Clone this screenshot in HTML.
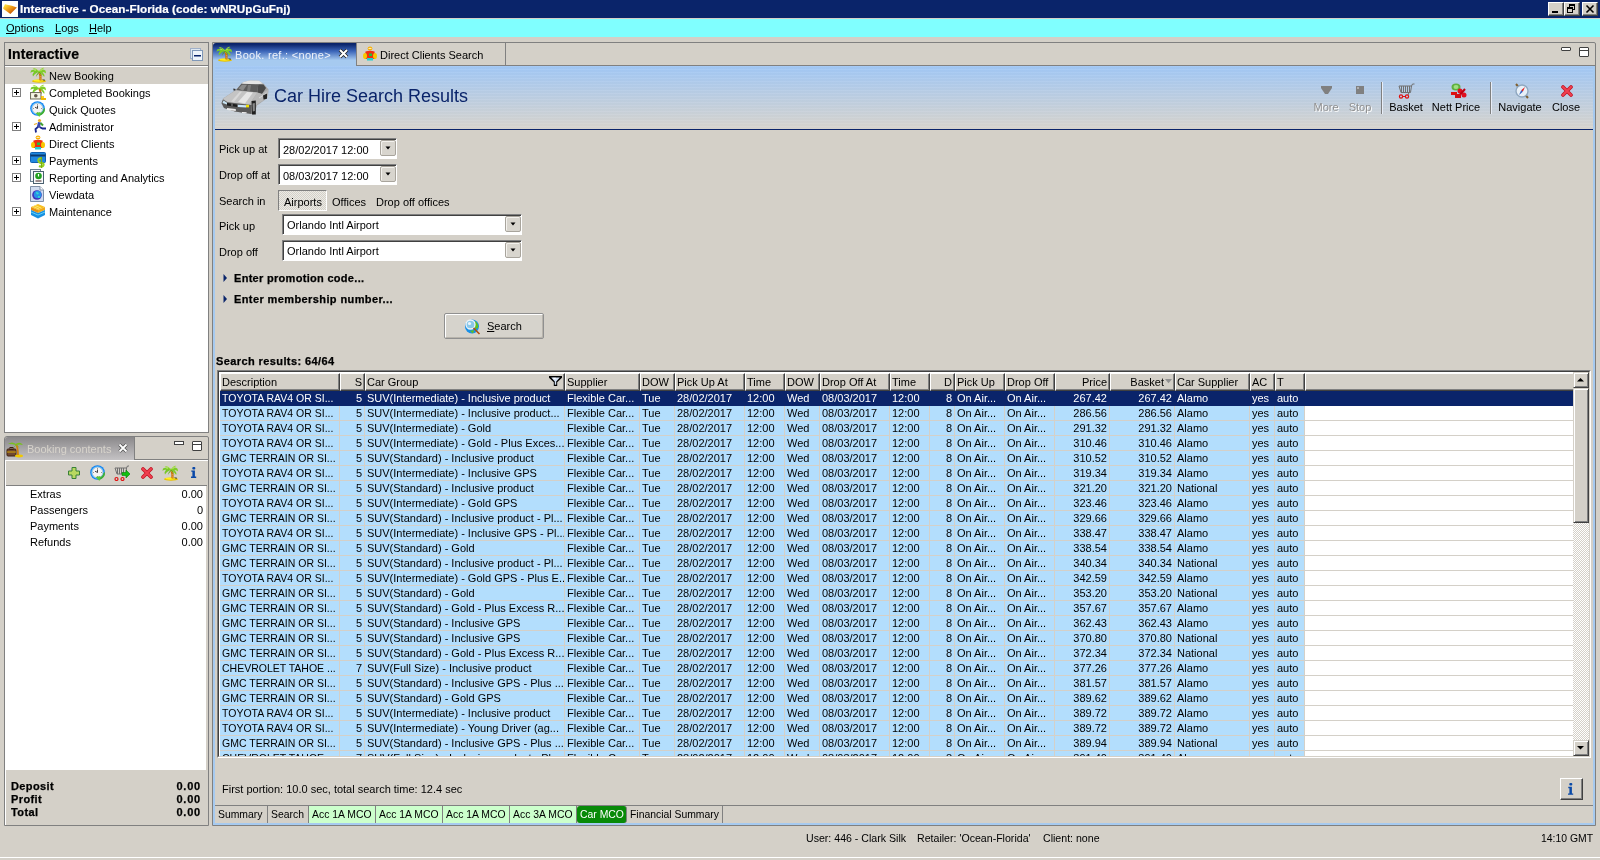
<!DOCTYPE html><html><head><meta charset="utf-8"><style>
*{margin:0;padding:0;box-sizing:border-box}
html,body{width:1600px;height:860px;overflow:hidden;background:#d4d0c8;font-family:"Liberation Sans",sans-serif;font-size:11px;color:#000}
.a{position:absolute}
.t{position:absolute;white-space:nowrap;line-height:13px}
.c{position:absolute;white-space:nowrap;line-height:13px;overflow:hidden}
.up{border-top:1px solid #fff;border-left:1px solid #fff;border-right:1px solid #404040;border-bottom:1px solid #404040;box-shadow:inset -1px -1px 0 #808080;background:#d4d0c8}
</style></head><body><div style="position:absolute;left:0;top:0;width:1600px;height:860px;will-change:transform">
<svg width="0" height="0" style="position:absolute">
<defs>
<symbol id="palm" viewBox="0 0 16 16">
 <ellipse cx="9" cy="14.2" rx="7" ry="1.6" fill="#e8c000"/>
 <ellipse cx="8.5" cy="13.6" rx="5" ry="1.1" fill="#fff020"/>
 <path d="M9.2 5 Q11.2 9 10.4 13.5" stroke="#c87010" stroke-width="2.2" fill="none"/>
 <path d="M9.5 6.5 L10.5 7.2 M10.2 9.5 L11 10.2 M10.2 11.8 L11 12.2" stroke="#f8c040" stroke-width="0.9"/>
 <path d="M12.5 12.8 L15 13.2" stroke="#303030" stroke-width="0.9"/>
 <path d="M9 4 Q5.5 1 1 3.6 L0.5 6 Q2 4.5 4 4.8 L2.5 7.5 L3 9.5 Q5.5 5.5 9.5 5 Z" fill="#78c828"/>
 <path d="M9 4 Q12.5 1 15.6 3.8 L16 6.5 Q14.5 4.8 12.5 5 L14.5 8 L14.2 10 Q11.5 6 8.8 5.2 Z" fill="#80cc28"/>
 <path d="M9 4.5 Q6 0 2.5 1.2 Q6.5 1.8 8.5 5 Z M9.2 4.4 Q11.5 0 14.5 1 Q11 2 9.4 5 Z" fill="#98dc30"/>
 <path d="M9 5 Q6.5 6.5 5.8 10 Q7.8 7.2 9.3 5.4 Z M9.3 5 Q11.8 6.5 12.5 9.8 Q10.8 7.2 9 5.4Z" fill="#58a818"/>
 <path d="M4 3 L6 3.6 M12 3 L10.2 3.8" stroke="#b8e860" stroke-width="0.8"/>
</symbol>
<symbol id="cross" viewBox="0 0 12 12">
 <path d="M2 2 L10 10 M10 2 L2 10" stroke="#c01020" stroke-width="3.6" stroke-linecap="round"/>
 <path d="M2 2 L10 10 M10 2 L2 10" stroke="#f04050" stroke-width="2.2" stroke-linecap="round"/>
</symbol>
<symbol id="clock" viewBox="0 0 16 16">
 <circle cx="7.5" cy="7.5" r="7.3" fill="#1080f0"/>
 <circle cx="7.5" cy="7.5" r="6.2" fill="#60c0ff"/>
 <circle cx="7.5" cy="7.5" r="5.2" fill="#f4f4f4" stroke="#b0b8c0" stroke-width="0.5"/>
 <path d="M7.5 3 V3.8 M7.5 11.2 V12 M3 7.5 H3.8 M11.2 7.5 H12" stroke="#606060" stroke-width="0.8"/>
 <path d="M7.5 4.5 V7.5 L5 6.2" stroke="#303030" stroke-width="0.9" fill="none"/>
 <path d="M15 7 Q15.5 12.5 9.5 15 L8.5 13 Q13 11.5 13.5 8 Z" fill="#40b030"/>
 <path d="M5.5 12 L9.5 16 L10.5 11 Z" fill="#58c838"/>
</symbol>
<symbol id="cart" viewBox="0 0 16 16">
 <path d="M1 3 H13.5 L12.5 9 H3 Z" fill="none" stroke="#707070" stroke-width="1"/>
 <path d="M4 3 V9 M6 3 V9 M8 3 V9 M10 3 V9 M12 3 V9" stroke="#707070" stroke-width="1"/>
 <path d="M13.5 3 L14.5 1 H16" stroke="#707070" stroke-width="1" fill="none"/>
 <path d="M11.5 9 L10.5 11" stroke="#707070"/>
 <circle cx="3.5" cy="13.5" r="1.6" fill="none" stroke="#e01010" stroke-width="1.2"/>
 <circle cx="9.5" cy="13.5" r="1.6" fill="none" stroke="#e01010" stroke-width="1.2"/>
 <path d="M3 13.5 H8" stroke="#e01010" stroke-width="1"/>
</symbol>
<symbol id="person" viewBox="0 0 16 16">
 <ellipse cx="8" cy="2.6" rx="2.4" ry="2" fill="#f8b000"/>
 <path d="M6.5 2.4 H9.5" stroke="#fff" stroke-width="0.8"/>
 <path d="M3.5 5.5 Q8 4 12.5 5.5 L13 13 H3 Z" fill="#f03010"/>
 <ellipse cx="3" cy="10" rx="2" ry="3" fill="#f8c800"/>
 <ellipse cx="13" cy="10" rx="2" ry="3" fill="#f8c800"/>
 <rect x="7" y="7.5" width="3" height="2.5" fill="#20c040"/>
 <rect x="5" y="12" width="6" height="2.5" fill="#20d0d0"/>
</symbol>
<symbol id="globe" viewBox="0 0 16 16">
 <circle cx="8" cy="8" r="6.5" fill="#3040c8"/>
 <circle cx="8.5" cy="7.5" r="5.5" fill="#3090e0"/>
 <path d="M5 4 Q8 3 10 6 Q8 8 6 7 Z M9 9 Q12 8 12.5 11 Q10 13 9 11Z" fill="#30d0d0"/>
</symbol>
</defs>
</svg>

<div class="a" style="left:0;top:0;width:1600px;height:18px;background:#0a246a"></div>
<div class="a" style="left:0;top:18px;width:1600px;height:1px;background:#d4d0c8"></div>
<div class="a" style="left:2px;top:1px;width:16px;height:16px;background:#fff"></div>
<svg class="a" style="left:2px;top:1px" width="16" height="16" viewBox="0 0 16 16"><defs><linearGradient id="gem" x1="0" y1="0" x2="1" y2="1"><stop offset="0.15" stop-color="#ffd838"/><stop offset="0.55" stop-color="#e88a10"/><stop offset="0.9" stop-color="#b03800"/></linearGradient></defs><path d="M1.1 7.1 L3 3.2 L10 4.8 L14.9 6.5 L8.4 13 L1.5 8 Z" fill="url(#gem)"/></svg>
<div class="t" style="left:20px;top:2px;color:#fff;font-weight:bold;font-size:11.7px;letter-spacing:0.05px;-webkit-text-stroke:0.2px #fff">Interactive - Ocean-Florida (code: wNRUpGuFnj)</div>
<div class="a up" style="left:1548px;top:2px;width:16px;height:14px"></div>
<div class="a up" style="left:1564px;top:2px;width:16px;height:14px"></div>
<div class="a up" style="left:1582px;top:2px;width:16px;height:14px"></div>
<div class="a" style="left:1552px;top:11px;width:6px;height:2px;background:#000"></div>
<svg class="a" style="left:1564px;top:2px" width="16" height="14" viewBox="0 0 16 14"><rect x="5.5" y="2.5" width="5" height="5" fill="none" stroke="#000"/><rect x="5" y="2" width="6" height="2" fill="#000"/><rect x="3.5" y="5.5" width="5" height="5" fill="#d4d0c8" stroke="#000"/><rect x="3" y="5" width="6" height="2" fill="#000"/></svg>
<svg class="a" style="left:1582px;top:2px" width="16" height="14" viewBox="0 0 16 14"><path d="M4.5 3.5 L11.5 10.5 M11.5 3.5 L4.5 10.5" stroke="#000" stroke-width="1.6"/></svg>
<div class="a" style="left:0;top:19px;width:1600px;height:18px;background:#80ffff"></div>
<div class="t" style="left:6px;top:22px;"><u>O</u>ptions</div>
<div class="t" style="left:55px;top:22px;"><u>L</u>ogs</div>
<div class="t" style="left:89px;top:22px;"><u>H</u>elp</div>
<div class="a" style="left:4px;top:42px;width:205px;height:391px;border:1px solid #808080;background:#fff"></div>
<div class="a" style="left:5px;top:43px;width:203px;height:23px;background:#d4d0c8;border-bottom:1px solid #808080"></div>
<div class="t" style="left:8px;top:46px;font-weight:bold;font-size:14px;line-height:16px;letter-spacing:0.1px;-webkit-text-stroke:0.2px #000">Interactive</div>
<svg class="a" style="left:189px;top:47px" width="16" height="16" viewBox="0 0 16 16"><rect x="1.5" y="1.5" width="10" height="10" fill="#dfe8f0" stroke="#a0b0c8"/><rect x="3.5" y="3.5" width="10" height="10" fill="#eef4fa" stroke="#8098b8"/><rect x="5" y="8" width="7" height="1.5" fill="#0a246a"/></svg>
<div class="a" style="left:5px;top:66px;width:203px;height:18px;background:#d4d0c8;border-top:1px solid #fff"></div>
<div class="t" style="left:49px;top:70px;">New Booking</div>
<div class="t" style="left:49px;top:87px;">Completed Bookings</div>
<svg class="a" style="left:11px;top:87px" width="11" height="11" viewBox="0 0 11 11"><rect x="1.5" y="1.5" width="8" height="8" fill="#fff" stroke="#808080"/><path d="M3 5.5 H8 M5.5 3 V8" stroke="#000"/></svg>
<div class="t" style="left:49px;top:104px;">Quick Quotes</div>
<div class="t" style="left:49px;top:121px;">Administrator</div>
<svg class="a" style="left:11px;top:121px" width="11" height="11" viewBox="0 0 11 11"><rect x="1.5" y="1.5" width="8" height="8" fill="#fff" stroke="#808080"/><path d="M3 5.5 H8 M5.5 3 V8" stroke="#000"/></svg>
<div class="t" style="left:49px;top:138px;">Direct Clients</div>
<div class="t" style="left:49px;top:155px;">Payments</div>
<svg class="a" style="left:11px;top:155px" width="11" height="11" viewBox="0 0 11 11"><rect x="1.5" y="1.5" width="8" height="8" fill="#fff" stroke="#808080"/><path d="M3 5.5 H8 M5.5 3 V8" stroke="#000"/></svg>
<div class="t" style="left:49px;top:172px;">Reporting and Analytics</div>
<svg class="a" style="left:11px;top:172px" width="11" height="11" viewBox="0 0 11 11"><rect x="1.5" y="1.5" width="8" height="8" fill="#fff" stroke="#808080"/><path d="M3 5.5 H8 M5.5 3 V8" stroke="#000"/></svg>
<div class="t" style="left:49px;top:189px;">Viewdata</div>
<div class="t" style="left:49px;top:206px;">Maintenance</div>
<svg class="a" style="left:11px;top:206px" width="11" height="11" viewBox="0 0 11 11"><rect x="1.5" y="1.5" width="8" height="8" fill="#fff" stroke="#808080"/><path d="M3 5.5 H8 M5.5 3 V8" stroke="#000"/></svg>
<svg class="a" style="left:30px;top:67px" width="16" height="16"><use href="#palm" width="16" height="16"/></svg>
<svg class="a" style="left:30px;top:84px" width="16" height="10" viewBox="0 0 16 10"><path d="M9 4 Q5.5 1 1 3.6 L0.5 6 Q2 4.5 4 4.8 L2.5 7.5 L3 9.5 Q5.5 5.5 9.5 5 Z" fill="#78c828"/><path d="M9 4 Q12.5 1 15.6 3.8 L16 6.5 Q14.5 4.8 12.5 5 L14.5 8 L14.2 10 Q11.5 6 8.8 5.2 Z" fill="#80cc28"/><path d="M9 4.5 Q6 0 2.5 1.2 Q6.5 1.8 8.5 5 Z M9.2 4.4 Q11.5 0 14.5 1 Q11 2 9.4 5 Z" fill="#98dc30"/><path d="M9.2 5 Q11 7 10.4 10" stroke="#c87010" stroke-width="2" fill="none"/></svg>
<svg class="a" style="left:30px;top:92px" width="16" height="8" viewBox="0 0 16 8"><rect x="0.5" y="0.5" width="10.5" height="6.5" fill="#e8e8d0" stroke="#707060"/><rect x="1.5" y="1.5" width="8.5" height="4.5" fill="#f4f4e4"/><circle cx="5.8" cy="3.8" r="1.8" fill="#605848"/><path d="M11 4 H14 V6 H16 V8 H11Z" fill="#f0b800"/><path d="M12 5 H14" stroke="#fff080" stroke-width="0.8"/></svg>
<svg class="a" style="left:30px;top:101px" width="16" height="16"><use href="#clock" width="16" height="16"/></svg>
<svg class="a" style="left:30px;top:118px" width="16" height="16" viewBox="0 0 16 16"><circle cx="9.5" cy="2.5" r="1.6" fill="#f0b020"/><path d="M8 4 L11 4.5 L10 9 L7 8.5 Z" fill="#3848b0"/><path d="M10.5 5 L13 7.5" stroke="#40a030" stroke-width="2"/><path d="M8.5 8.5 L5.5 11 L6 14.5 M9.5 9 L12.5 10.5 L16 10.5" stroke="#1a2890" stroke-width="1.8" fill="none"/><path d="M7 5.5 L4 6.5" stroke="#f0b020" stroke-width="1.2"/></svg>
<svg class="a" style="left:30px;top:135px" width="16" height="16"><use href="#person" width="16" height="16"/></svg>
<svg class="a" style="left:30px;top:152px" width="16" height="16" viewBox="0 0 16 16"><rect x="0.5" y="0.5" width="15" height="10" rx="1" fill="#2088e0" stroke="#1060b0"/><rect x="0.5" y="2.5" width="15" height="2" fill="#0a3a70"/><path d="M12 6 Q8 6 8.5 9 Q9 11 12 11 Q14.5 11.5 13 14 Q11 15 9 14" stroke="#98d020" stroke-width="2.2" fill="none"/><path d="M11.5 5 V16" stroke="#78b010" stroke-width="1.2"/></svg>
<svg class="a" style="left:30px;top:169px" width="16" height="16" viewBox="0 0 16 16"><rect x="0.5" y="0.5" width="10" height="12" fill="#f0f4f8" stroke="#6a8090"/><rect x="3.5" y="2.5" width="10" height="12" fill="#f8fafc" stroke="#4a6070"/><circle cx="8.5" cy="7" r="3.3" fill="#20a020"/><path d="M8.5 5 V7.5" stroke="#fff" stroke-width="1.2"/><rect x="5.5" y="11.5" width="6" height="1" fill="#402020"/></svg>
<svg class="a" style="left:30px;top:186px" width="16" height="16" viewBox="0 0 16 16"><path d="M0.5 0.5 H10 L13.5 4 V15.5 H0.5 Z" fill="#d0dcf0" stroke="#8090a8"/><path d="M10 0.5 V4 H13.5" fill="#fff" stroke="#8090a8"/><circle cx="7" cy="9" r="4.8" fill="#4030b8"/><circle cx="7.6" cy="8.5" r="3.8" fill="#2890e8"/><path d="M6 6 Q8 5.5 9 7.5 Q7.5 9 6.5 8Z M8 10 Q10 9.5 10.5 11 Q9 12.5 8 11.5Z" fill="#30d8d0"/></svg>
<svg class="a" style="left:30px;top:203px" width="16" height="16" viewBox="0 0 16 16"><path d="M1 4 L8 1 L15 4 L8 7 Z" fill="#f8c020"/><path d="M1 4 L8 7 V10 L1 7Z" fill="#e89010"/><path d="M15 4 L8 7 V10 L15 7Z" fill="#f0a818"/><path d="M1 7 L8 10 L15 7 V12 L8 15.5 L1 12 Z" fill="#1890e0"/><path d="M1 9 L8 12 L15 9" stroke="#60d0f8" stroke-width="1" fill="none"/><path d="M3 3.5 L9 6 M5 2.5 L11 5" stroke="#fff080" stroke-width="0.8"/></svg>
<div class="a" style="left:4px;top:436px;width:205px;height:390px;border:1px solid #808080;border-top-left-radius:3px;border-top-right-radius:2px;background:#d4d0c8"></div>
<div class="a" style="left:5px;top:437px;width:130px;height:23px;background:linear-gradient(#8a888a,#a8a6a8 50%,#c4c2c4);border-top-left-radius:3px;border-right:1px solid #808080"></div>
<div class="t" style="left:27px;top:443px;color:#d8d4cc;font-size:11px">Booking contents</div>
<svg class="a" style="left:117px;top:442px" width="12" height="12" viewBox="0 0 12 12"><path d="M2.5 2.5 L9.5 9.5 M9.5 2.5 L2.5 9.5" stroke="#505050" stroke-width="3.2"/><path d="M2.5 2.5 L9.5 9.5 M9.5 2.5 L2.5 9.5" stroke="#fff" stroke-width="1.8"/></svg>
<svg class="a" style="left:6px;top:440px" width="18" height="18" viewBox="0 0 18 18"><rect x="1" y="9" width="9" height="7" rx="1" fill="#704830" stroke="#402010"/><rect x="4" y="7.5" width="3" height="2" fill="none" stroke="#402010"/><path d="M1 12 H10" stroke="#f0c000" stroke-width="0.8"/><ellipse cx="13" cy="16" rx="4" ry="1.4" fill="#f0c800"/><path d="M10 4 Q12 8 12 15" stroke="#d08010" stroke-width="1.8" fill="none"/><path d="M10 4 Q6 1 2 4 Q5 3.5 10 5 Z M10 4 Q14 1 17 5 Q14 4 10 5Z M10 4.5 Q8 6 7 9 Q9 6 10.5 5Z M10.5 4.5 Q13 6 14 9 Q12 6 10 5Z" fill="#78c020"/></svg>
<div class="a" style="left:135px;top:459px;width:73px;height:1px;background:#808080"></div>
<div class="a" style="left:174px;top:441px;width:10px;height:4px;border:1px solid #404040;background:#fff"></div>
<div class="a" style="left:192px;top:441px;width:10px;height:10px;border:1px solid #404040;border-radius:1px;background:#fff;box-shadow:inset 0 2px 0 #fff,inset 0 3px 0 #404040"></div>
<div class="a" style="left:5px;top:460px;width:203px;height:365px;border-left:1px solid #fff;border-top:1px solid #fff"></div>
<div class="a" style="left:6px;top:485px;width:201px;height:1px;background:#808080"></div>
<div class="a" style="left:6px;top:486px;width:200px;height:284px;background:#fff"></div>
<svg class="a" style="left:68px;top:467px" width="12" height="12" viewBox="0 0 12 12"><path d="M4 0.5 H8 V4 H11.5 V8 H8 V11.5 H4 V8 H0.5 V4 H4 Z" fill="#b8d860" stroke="#388038"/></svg>
<svg class="a" style="left:90px;top:465px" width="16" height="16"><use href="#clock" width="16" height="16"/></svg>
<svg class="a" style="left:114px;top:465px" width="17" height="16" viewBox="0 0 17 16"><path d="M1 3 H12.5 L12 9 H3 Z" fill="none" stroke="#707070"/><path d="M3.5 3 V9 M5.5 3 V9 M7.5 3 V9 M9.5 3 V9" stroke="#707070"/><path d="M12.5 3 L13.5 1 H15" stroke="#707070" fill="none"/><circle cx="2.5" cy="14" r="1.5" fill="none" stroke="#e01010" stroke-width="1.2"/><circle cx="8.5" cy="14" r="1.5" fill="none" stroke="#e01010" stroke-width="1.2"/><path d="M8 7.5 H12 V5 L16 9 L12 13 V10.5 H8 Z" fill="#10c010" stroke="#088008" stroke-width="0.6"/></svg>
<svg class="a" style="left:141px;top:467px" width="12" height="12"><use href="#cross" width="12" height="12"/></svg>
<svg class="a" style="left:162px;top:465px" width="16" height="16"><use href="#palm" width="16" height="16"/></svg>
<svg class="a" style="left:191px;top:467px" width="6" height="11" viewBox="0 0 6 11"><rect x="1.3" y="0" width="3" height="2.4" rx="1" fill="#0a48a8"/><path d="M0.3 3.4 H3.9 V9.6 H5.2 V11 H0 V9.6 H1.4 V4.8 H0.3 Z" fill="#0a48a8"/></svg>
<div class="t" style="left:30px;top:488px;">Extras</div>
<div class="t" style="right:1397px;top:488px">0.00</div>
<div class="t" style="left:30px;top:504px;">Passengers</div>
<div class="t" style="right:1397px;top:504px">0</div>
<div class="t" style="left:30px;top:520px;">Payments</div>
<div class="t" style="right:1397px;top:520px">0.00</div>
<div class="t" style="left:30px;top:536px;">Refunds</div>
<div class="t" style="right:1397px;top:536px">0.00</div>
<div class="t" style="left:11px;top:780px;font-weight:bold;letter-spacing:0.4px;-webkit-text-stroke:0.25px #000">Deposit</div>
<div class="t" style="right:1399px;top:780px;font-weight:bold;letter-spacing:0.8px;-webkit-text-stroke:0.25px #000">0.00</div>
<div class="t" style="left:11px;top:793px;font-weight:bold;letter-spacing:0.4px;-webkit-text-stroke:0.25px #000">Profit</div>
<div class="t" style="right:1399px;top:793px;font-weight:bold;letter-spacing:0.8px;-webkit-text-stroke:0.25px #000">0.00</div>
<div class="t" style="left:11px;top:806px;font-weight:bold;letter-spacing:0.4px;-webkit-text-stroke:0.25px #000">Total</div>
<div class="t" style="right:1399px;top:806px;font-weight:bold;letter-spacing:0.8px;-webkit-text-stroke:0.25px #000">0.00</div>
<div class="a" style="left:212px;top:42px;width:1384px;height:784px;border:1px solid #808080;border-top-right-radius:2px;background:#d4d0c8"></div>
<div class="a" style="left:213px;top:66px;width:1382px;height:759px;border-left:2px solid #a6caf0;border-right:2px solid #a6caf0;border-bottom:2px solid #a6caf0"></div>
<div class="a" style="left:213px;top:43px;width:143px;height:23px;background:linear-gradient(#0a246a 5%,#3a64b8 35%,#a6caf0 75%);border-top-left-radius:3px"></div>
<svg class="a" style="left:216px;top:46px" width="16" height="16"><use href="#palm" width="16" height="16"/></svg>
<div class="t" style="left:235px;top:49px;color:#eef2fa;letter-spacing:0.3px">Book. ref.: &lt;none&gt;</div>
<svg class="a" style="left:337px;top:47px" width="13" height="13" viewBox="0 0 13 13"><path d="M3 3 L10 10 M10 3 L3 10" stroke="#202020" stroke-width="3.6"/><path d="M3 3 L10 10 M10 3 L3 10" stroke="#fff" stroke-width="2"/></svg>
<div class="a" style="left:356px;top:43px;width:150px;height:23px;border-left:1px solid #808080;border-right:1px solid #808080;border-bottom:1px solid #808080"></div>
<svg class="a" style="left:362px;top:46px" width="16" height="16"><use href="#person" width="16" height="16"/></svg>
<div class="t" style="left:380px;top:49px;">Direct Clients Search</div>
<div class="a" style="left:506px;top:65px;width:1089px;height:1px;background:#808080"></div>
<div class="a" style="left:1561px;top:47px;width:10px;height:4px;border:1px solid #404040;border-radius:1px;background:#fff"></div>
<div class="a" style="left:1579px;top:47px;width:10px;height:10px;border:1px solid #404040;border-radius:1px;background:#fff;box-shadow:inset 0 2px 0 #fff,inset 0 3px 0 #404040"></div>
<div class="a" style="left:215px;top:66px;width:1378px;height:63px;background:repeating-linear-gradient(rgba(255,255,255,0.05) 0 1px,rgba(0,0,0,0.012) 1px 3px),linear-gradient(#a2c8f6,#d8d5cf)"></div>
<div class="a" style="left:215px;top:129px;width:1378px;height:1px;background:#0a246a"></div>
<svg class="a" style="left:221px;top:80px" width="48" height="35" viewBox="0 0 48 35">
<path d="M2 18.5 L14.3 10.2 L21 3 Q24 1 30 0.5 L38 0.8 L43 4 L47.5 9.5 L47 15 L45 19 L36 25.5 L33 34.5 L30 34 L14 31.5 L3 28 L0.5 23.5 Z" fill="#a8a8a8"/>
<path d="M21 3 Q24 1 30 0.5 L38 0.8 L42 3.5 L37 4.3 L21.5 4 Z" fill="#e4e4e4"/>
<path d="M15.3 10 L20.5 3.8 L37.3 4.3 L36.3 12.5 Z" fill="#5c5c5c"/>
<path d="M17.5 8.5 L21 4.8 L26 4.8 L22 10.8 Z" fill="#8a8a8a"/>
<path d="M27 5 L30 5 L29 11.5 L26 11.3 Z" fill="#7a7a7a"/>
<path d="M37.3 4.3 L42.5 4.5 L45 8 L41 14 L36.3 12.5 Z" fill="#4a4a4a"/>
<path d="M36.3 12.5 L41 14 L47 9.5 L46.5 17.5 L35 25 L28.5 25 Z" fill="#b8b8b8"/>
<path d="M38 18 L46 13" stroke="#e0e0e0" stroke-width="0.8"/>
<path d="M12.3 8.4 L14.5 9 L14.5 10.8 L12.5 10.5 Z" fill="#303030"/>
<path d="M2 18.7 L14.3 10.5 L36.3 12.5 L28.1 24.8 L6.6 22.3 Z" fill="#c4c4c4"/>
<path d="M17 22 L26 12 L32 12.5 L24 23.5 Z" fill="#e6e6e6"/>
<path d="M10 21.5 L19 11.5 L21 11.7 L13 22 Z" fill="#d8d8d8"/>
<path d="M0.5 23 L2 19.5 L6.6 22.3 L28.1 24.8 L30.5 25 L30.5 34 L14 31.5 L3 28 Z" fill="#5a5a5a"/>
<path d="M6 23 L16 24.5 L16 27 L6 25.5 Z" fill="#1e1e1e"/>
<path d="M10.5 23.5 L11.5 23.7 L11.5 26.2 L10.5 26 Z" fill="#909090"/>
<path d="M2.5 20.5 L6 22.8 L6 24.5 L1.5 23 Z" fill="#c8e4f4"/>
<path d="M16.9 24.8 L25 25.2 L25 27.4 L16.9 27 Z" fill="#c8e4f8"/>
<rect x="25" y="24.8" width="3" height="2.6" fill="#f0e000"/>
<path d="M6 28 L14.8 29 L14.8 31 L6 30 Z" fill="#ececec"/>
<path d="M21 32 L25.6 32.3 L25.6 33.3 L21 33 Z" fill="#f4f4f4"/>
<path d="M30.5 21 L34.8 20.5 L34.8 34.5 L31 34.5 Z" fill="#202020"/>
<path d="M31.5 23.5 L33.8 23 L33.8 31 L31.8 31.5 Z" fill="#8a8a8a"/>
<path d="M42 15.6 L46 13.5 L46 18.7 L42.5 19.5 Z" fill="#252525"/>
</svg>
<div class="t" style="left:274px;top:86px;color:#0a246a;font-size:18px;line-height:20px">Car Hire Search Results</div>
<div class="t" style="left:1286px;width:80px;text-align:center;top:101px;color:#909090;text-shadow:1px 1px 0 #fff">More</div>
<div class="t" style="left:1320px;width:80px;text-align:center;top:101px;color:#909090;text-shadow:1px 1px 0 #fff">Stop</div>
<div class="t" style="left:1366px;width:80px;text-align:center;top:101px;color:#000">Basket</div>
<div class="t" style="left:1416px;width:80px;text-align:center;top:101px;color:#000">Nett Price</div>
<div class="t" style="left:1480px;width:80px;text-align:center;top:101px;color:#000">Navigate</div>
<div class="t" style="left:1526px;width:80px;text-align:center;top:101px;color:#000">Close</div>
<div class="a" style="left:1381px;top:82px;width:1px;height:32px;background:#808080"></div>
<div class="a" style="left:1382px;top:82px;width:1px;height:32px;background:#e8eef8"></div>
<div class="a" style="left:1490px;top:82px;width:1px;height:32px;background:#808080"></div>
<div class="a" style="left:1491px;top:82px;width:1px;height:32px;background:#e8eef8"></div>
<svg class="a" style="left:1321px;top:86px" width="11" height="9" viewBox="0 0 11 9"><path d="M0 0 H11 V2 L7 8 H4 L0 2 Z" fill="#808080"/></svg>
<svg class="a" style="left:1356px;top:86px" width="8" height="8" viewBox="0 0 8 8"><rect x="0" y="0" width="8" height="8" fill="#808080"/><rect x="1" y="1" width="2" height="2" fill="#b0b0b0"/></svg>
<svg class="a" style="left:1398px;top:83px" width="17" height="16" viewBox="0 0 17 16"><path d="M1 3 H13.5 L12.5 9.5 H3 Z" fill="none" stroke="#707070"/><path d="M3.5 3 V9.5 M5.5 3 V9.5 M7.5 3 V9.5 M9.5 3 V9.5 M11.5 3 V9.5" stroke="#707070"/><path d="M13.5 3 L14.5 1 H16.5" stroke="#707070" fill="none"/><path d="M11 9.5 L10 12" stroke="#707070"/><circle cx="3" cy="13.5" r="1.6" fill="none" stroke="#e01010" stroke-width="1.2"/><circle cx="9" cy="13.5" r="1.6" fill="none" stroke="#e01010" stroke-width="1.2"/><path d="M4.5 13.5 H7.5" stroke="#e01010"/></svg>
<svg class="a" style="left:1450px;top:83px" width="17" height="16" viewBox="0 0 17 16"><ellipse cx="6" cy="4" rx="4.5" ry="3.5" fill="#60b040"/><ellipse cx="6" cy="4" rx="2.5" ry="2" fill="#a0e080"/><rect x="1" y="9" width="6" height="3" fill="#e01010"/><circle cx="10" cy="8" r="2.5" fill="#e01020"/><circle cx="14" cy="12" r="2.5" fill="#e01020"/><path d="M15 6 L8 14" stroke="#c00010" stroke-width="2"/><rect x="5" y="11" width="6" height="4" fill="#d01018"/></svg>
<svg class="a" style="left:1514px;top:83px" width="16" height="16" viewBox="0 0 16 16"><path d="M2 1 L14 15" stroke="#806030" stroke-width="2"/><circle cx="8" cy="8" r="6" fill="#e8f0f8" stroke="#90a8c0" stroke-width="1.4"/><path d="M11 4 L8.8 8.8 L7.2 7.2 Z" fill="#e02020"/><path d="M5 12 L7.2 7.2 L8.8 8.8 Z" fill="#3060c0"/></svg>
<svg class="a" style="left:1561px;top:85px" width="12" height="12"><use href="#cross" width="12" height="12"/></svg>
<div class="a" style="left:215px;top:129px;width:1378px;height:1px;background:#0a246a"></div>
<div class="t" style="left:219px;top:143px;">Pick up at</div>
<div class="t" style="left:219px;top:169px;">Drop off at</div>
<div class="t" style="left:219px;top:195px;">Search in</div>
<div class="t" style="left:219px;top:220px;">Pick up</div>
<div class="t" style="left:219px;top:246px;">Drop off</div>
<div class="a" style="left:278px;top:138px;width:119px;height:21px;background:#fff;border-top:1px solid #808080;border-left:1px solid #808080;border-right:1px solid #fff;border-bottom:1px solid #fff;box-shadow:inset 1px 1px 0 #404040"></div>
<div class="t" style="left:283px;top:144px;">28/02/2017 12:00</div>
<div class="a" style="left:380px;top:140px;width:16px;height:16px;background:#d8d5ce;border:1px solid #a8a49c;border-radius:2px;box-shadow:inset 1px 1px 0 #f4f2ee"></div>
<svg class="a" style="left:380px;top:140px" width="16" height="16" viewBox="0 0 16 16"><path d="M5.5 6.5 H10.5 L8 9.5 Z" fill="#000"/></svg>
<div class="a" style="left:278px;top:164px;width:119px;height:21px;background:#fff;border-top:1px solid #808080;border-left:1px solid #808080;border-right:1px solid #fff;border-bottom:1px solid #fff;box-shadow:inset 1px 1px 0 #404040"></div>
<div class="t" style="left:283px;top:170px;">08/03/2017 12:00</div>
<div class="a" style="left:380px;top:166px;width:16px;height:16px;background:#d8d5ce;border:1px solid #a8a49c;border-radius:2px;box-shadow:inset 1px 1px 0 #f4f2ee"></div>
<svg class="a" style="left:380px;top:166px" width="16" height="16" viewBox="0 0 16 16"><path d="M5.5 6.5 H10.5 L8 9.5 Z" fill="#000"/></svg>
<div class="a" style="left:282px;top:214px;width:240px;height:21px;background:#fff;border-top:1px solid #808080;border-left:1px solid #808080;border-right:1px solid #fff;border-bottom:1px solid #fff;box-shadow:inset 1px 1px 0 #404040"></div>
<div class="t" style="left:287px;top:219px;">Orlando Intl Airport</div>
<div class="a" style="left:505px;top:216px;width:16px;height:16px;background:#d8d5ce;border:1px solid #a8a49c;border-radius:2px;box-shadow:inset 1px 1px 0 #f4f2ee"></div>
<svg class="a" style="left:505px;top:216px" width="16" height="16" viewBox="0 0 16 16"><path d="M5.5 6.5 H10.5 L8 9.5 Z" fill="#000"/></svg>
<div class="a" style="left:282px;top:240px;width:240px;height:21px;background:#fff;border-top:1px solid #808080;border-left:1px solid #808080;border-right:1px solid #fff;border-bottom:1px solid #fff;box-shadow:inset 1px 1px 0 #404040"></div>
<div class="t" style="left:287px;top:245px;">Orlando Intl Airport</div>
<div class="a" style="left:505px;top:242px;width:16px;height:16px;background:#d8d5ce;border:1px solid #a8a49c;border-radius:2px;box-shadow:inset 1px 1px 0 #f4f2ee"></div>
<svg class="a" style="left:505px;top:242px" width="16" height="16" viewBox="0 0 16 16"><path d="M5.5 6.5 H10.5 L8 9.5 Z" fill="#000"/></svg>
<div class="a" style="left:278px;top:190px;width:49px;height:21px;border-top:1px solid #808080;border-left:1px solid #808080;border-right:1px solid #fff;border-bottom:1px solid #fff;background:repeating-conic-gradient(#ecebe6 0 25%,#d4d0c8 0 50%) 0 0/2px 2px"></div>
<div class="t" style="left:284px;top:196px;">Airports</div>
<div class="t" style="left:332px;top:196px;">Offices</div>
<div class="t" style="left:376px;top:196px;">Drop off offices</div>
<svg class="a" style="left:222px;top:273px" width="6" height="10" viewBox="0 0 6 10"><path d="M1.5 1 L5 5 L1.5 9 Z" fill="#0a246a"/></svg>
<svg class="a" style="left:222px;top:294px" width="6" height="10" viewBox="0 0 6 10"><path d="M1.5 1 L5 5 L1.5 9 Z" fill="#0a246a"/></svg>
<div class="t" style="left:234px;top:272px;font-weight:bold;letter-spacing:0.3px;-webkit-text-stroke:0.25px #000">Enter promotion code...</div>
<div class="t" style="left:234px;top:293px;font-weight:bold;letter-spacing:0.4px;-webkit-text-stroke:0.25px #000">Enter membership number...</div>
<div class="a" style="left:444px;top:313px;width:100px;height:26px;background:#d6d3cc;border:1px solid #909090;border-radius:2px;box-shadow:inset 1px 1px 0 #fff,inset -1px -1px 0 #b8b4ac"></div>
<svg class="a" style="left:464px;top:318px" width="17" height="17" viewBox="0 0 17 17"><circle cx="8" cy="8.5" r="7" fill="#1890e8"/><path d="M11 3 Q15 6 14 10 L11 11Z M6 13 L10 12 L9 15.5Z" fill="#60c020"/><circle cx="6.5" cy="6.5" r="4.5" fill="#8ac8e8" stroke="#f0f4f8" stroke-width="1.3"/><circle cx="5.5" cy="5.5" r="1.6" fill="#e8f4ff"/><path d="M9.5 10 L15.5 16" stroke="#b05010" stroke-width="1.6"/></svg>
<div class="t" style="left:487px;top:320px;"><u>S</u>earch</div>
<div class="t" style="left:216px;top:355px;font-weight:bold;letter-spacing:0.4px;-webkit-text-stroke:0.25px #000">Search results: 64/64</div>
<div class="a" style="left:217px;top:370px;width:1374px;height:388px;border-top:1px solid #808080;border-left:1px solid #808080;border-right:1px solid #fff;border-bottom:1px solid #fff;background:#fff"></div>
<div class="a" style="left:218px;top:371px;width:1372px;height:386px;border-top:1px solid #404040;border-left:1px solid #404040;border-right:1px solid #d4d0c8;border-bottom:1px solid #d4d0c8;background:#fff"></div>
<div class="a up" style="left:220px;top:373px;width:120px;height:18px"></div>
<div class="t" style="left:222px;top:376px">Description</div>
<div class="a up" style="left:340px;top:373px;width:25px;height:18px"></div>
<div class="t" style="right:1238px;top:376px">S</div>
<div class="a up" style="left:365px;top:373px;width:200px;height:18px"></div>
<div class="t" style="left:367px;top:376px">Car Group</div>
<div class="a up" style="left:565px;top:373px;width:75px;height:18px"></div>
<div class="t" style="left:567px;top:376px">Supplier</div>
<div class="a up" style="left:640px;top:373px;width:35px;height:18px"></div>
<div class="t" style="left:642px;top:376px">DOW</div>
<div class="a up" style="left:675px;top:373px;width:70px;height:18px"></div>
<div class="t" style="left:677px;top:376px">Pick Up At</div>
<div class="a up" style="left:745px;top:373px;width:40px;height:18px"></div>
<div class="t" style="left:747px;top:376px">Time</div>
<div class="a up" style="left:785px;top:373px;width:35px;height:18px"></div>
<div class="t" style="left:787px;top:376px">DOW</div>
<div class="a up" style="left:820px;top:373px;width:70px;height:18px"></div>
<div class="t" style="left:822px;top:376px">Drop Off At</div>
<div class="a up" style="left:890px;top:373px;width:40px;height:18px"></div>
<div class="t" style="left:892px;top:376px">Time</div>
<div class="a up" style="left:930px;top:373px;width:25px;height:18px"></div>
<div class="t" style="right:648px;top:376px">D</div>
<div class="a up" style="left:955px;top:373px;width:50px;height:18px"></div>
<div class="t" style="left:957px;top:376px">Pick Up</div>
<div class="a up" style="left:1005px;top:373px;width:50px;height:18px"></div>
<div class="t" style="left:1007px;top:376px">Drop Off</div>
<div class="a up" style="left:1055px;top:373px;width:55px;height:18px"></div>
<div class="t" style="right:493px;top:376px">Price</div>
<div class="a up" style="left:1110px;top:373px;width:65px;height:18px"></div>
<div class="t" style="right:436px;top:376px">Basket</div>
<div class="a up" style="left:1175px;top:373px;width:75px;height:18px"></div>
<div class="t" style="left:1177px;top:376px">Car Supplier</div>
<div class="a up" style="left:1250px;top:373px;width:25px;height:18px"></div>
<div class="t" style="left:1252px;top:376px">AC</div>
<div class="a up" style="left:1275px;top:373px;width:30px;height:18px"></div>
<div class="t" style="left:1277px;top:376px">T</div>
<div class="a" style="left:1305px;top:373px;width:268px;height:18px;background:#d4d0c8;border-top:1px solid #fff;border-left:1px solid #fff;border-bottom:1px solid #404040;box-shadow:inset 0 -1px 0 #808080"></div>
<svg class="a" style="left:549px;top:376px" width="13" height="10" viewBox="0 0 13 10"><path d="M0 0 H13 V1.8 L8.2 6.3 V10 H4.8 V6.3 L0 1.8 Z" fill="#000"/><path d="M2.2 1.6 H10.8 L7.2 5.4 V8.8 H5.8 V5.4 Z" fill="#d4e2f6"/><path d="M3.5 1.8 H7 L6 3.5 Z" fill="#fff"/></svg>
<svg class="a" style="left:1165px;top:379px" width="8" height="6" viewBox="0 0 8 6"><path d="M0 0 H7 L3.5 4.2 Z" fill="#909090"/></svg>
<div class="a" style="left:220px;top:391px;width:1353px;height:365px;overflow:hidden">
<div class="a" style="left:0;top:0px;width:1353px;height:15px;background:#0a246a"></div>
<div class="c" style="left:2px;width:117px;top:1px;color:#fff;font-size:10.5px">TOYOTA RAV4 OR SI...</div>
<div class="c" style="left:121px;width:21px;text-align:right;top:1px;color:#fff">5</div>
<div class="c" style="left:147px;width:197px;top:1px;color:#fff">SUV(Intermediate) - Inclusive product</div>
<div class="c" style="left:347px;width:72px;top:1px;color:#fff">Flexible Car...</div>
<div class="c" style="left:422px;width:32px;top:1px;color:#fff">Tue</div>
<div class="c" style="left:457px;width:67px;top:1px;color:#fff">28/02/2017</div>
<div class="c" style="left:527px;width:37px;top:1px;color:#fff">12:00</div>
<div class="c" style="left:567px;width:32px;top:1px;color:#fff">Wed</div>
<div class="c" style="left:602px;width:67px;top:1px;color:#fff">08/03/2017</div>
<div class="c" style="left:672px;width:37px;top:1px;color:#fff">12:00</div>
<div class="c" style="left:711px;width:21px;text-align:right;top:1px;color:#fff">8</div>
<div class="c" style="left:737px;width:47px;top:1px;color:#fff">On Air...</div>
<div class="c" style="left:787px;width:47px;top:1px;color:#fff">On Air...</div>
<div class="c" style="left:836px;width:51px;text-align:right;top:1px;color:#fff">267.42</div>
<div class="c" style="left:891px;width:61px;text-align:right;top:1px;color:#fff">267.42</div>
<div class="c" style="left:957px;width:72px;top:1px;color:#fff">Alamo</div>
<div class="c" style="left:1032px;width:22px;top:1px;color:#fff">yes</div>
<div class="c" style="left:1057px;width:27px;top:1px;color:#fff">auto</div>
<div class="a" style="left:0;top:15px;width:1085px;height:14px;background:#b3defd"></div>
<div class="a" style="left:0;top:29px;width:1353px;height:1px;background:#d4d0c8"></div>
<div class="a" style="left:119px;top:15px;width:1px;height:14px;background:#d4d0c8"></div>
<div class="c" style="left:2px;width:117px;top:16px;color:#000;font-size:10.5px">TOYOTA RAV4 OR SI...</div>
<div class="a" style="left:144px;top:15px;width:1px;height:14px;background:#d4d0c8"></div>
<div class="c" style="left:121px;width:21px;text-align:right;top:16px;color:#000">5</div>
<div class="a" style="left:344px;top:15px;width:1px;height:14px;background:#d4d0c8"></div>
<div class="c" style="left:147px;width:197px;top:16px;color:#000">SUV(Intermediate) - Inclusive product...</div>
<div class="a" style="left:419px;top:15px;width:1px;height:14px;background:#d4d0c8"></div>
<div class="c" style="left:347px;width:72px;top:16px;color:#000">Flexible Car...</div>
<div class="a" style="left:454px;top:15px;width:1px;height:14px;background:#d4d0c8"></div>
<div class="c" style="left:422px;width:32px;top:16px;color:#000">Tue</div>
<div class="a" style="left:524px;top:15px;width:1px;height:14px;background:#d4d0c8"></div>
<div class="c" style="left:457px;width:67px;top:16px;color:#000">28/02/2017</div>
<div class="a" style="left:564px;top:15px;width:1px;height:14px;background:#d4d0c8"></div>
<div class="c" style="left:527px;width:37px;top:16px;color:#000">12:00</div>
<div class="a" style="left:599px;top:15px;width:1px;height:14px;background:#d4d0c8"></div>
<div class="c" style="left:567px;width:32px;top:16px;color:#000">Wed</div>
<div class="a" style="left:669px;top:15px;width:1px;height:14px;background:#d4d0c8"></div>
<div class="c" style="left:602px;width:67px;top:16px;color:#000">08/03/2017</div>
<div class="a" style="left:709px;top:15px;width:1px;height:14px;background:#d4d0c8"></div>
<div class="c" style="left:672px;width:37px;top:16px;color:#000">12:00</div>
<div class="a" style="left:734px;top:15px;width:1px;height:14px;background:#d4d0c8"></div>
<div class="c" style="left:711px;width:21px;text-align:right;top:16px;color:#000">8</div>
<div class="a" style="left:784px;top:15px;width:1px;height:14px;background:#d4d0c8"></div>
<div class="c" style="left:737px;width:47px;top:16px;color:#000">On Air...</div>
<div class="a" style="left:834px;top:15px;width:1px;height:14px;background:#d4d0c8"></div>
<div class="c" style="left:787px;width:47px;top:16px;color:#000">On Air...</div>
<div class="a" style="left:889px;top:15px;width:1px;height:14px;background:#d4d0c8"></div>
<div class="c" style="left:836px;width:51px;text-align:right;top:16px;color:#000">286.56</div>
<div class="a" style="left:954px;top:15px;width:1px;height:14px;background:#d4d0c8"></div>
<div class="c" style="left:891px;width:61px;text-align:right;top:16px;color:#000">286.56</div>
<div class="a" style="left:1029px;top:15px;width:1px;height:14px;background:#d4d0c8"></div>
<div class="c" style="left:957px;width:72px;top:16px;color:#000">Alamo</div>
<div class="a" style="left:1054px;top:15px;width:1px;height:14px;background:#d4d0c8"></div>
<div class="c" style="left:1032px;width:22px;top:16px;color:#000">yes</div>
<div class="a" style="left:1084px;top:15px;width:1px;height:14px;background:#d4d0c8"></div>
<div class="c" style="left:1057px;width:27px;top:16px;color:#000">auto</div>
<div class="a" style="left:0;top:30px;width:1085px;height:14px;background:#b3defd"></div>
<div class="a" style="left:0;top:44px;width:1353px;height:1px;background:#d4d0c8"></div>
<div class="a" style="left:119px;top:30px;width:1px;height:14px;background:#d4d0c8"></div>
<div class="c" style="left:2px;width:117px;top:31px;color:#000;font-size:10.5px">TOYOTA RAV4 OR SI...</div>
<div class="a" style="left:144px;top:30px;width:1px;height:14px;background:#d4d0c8"></div>
<div class="c" style="left:121px;width:21px;text-align:right;top:31px;color:#000">5</div>
<div class="a" style="left:344px;top:30px;width:1px;height:14px;background:#d4d0c8"></div>
<div class="c" style="left:147px;width:197px;top:31px;color:#000">SUV(Intermediate) - Gold</div>
<div class="a" style="left:419px;top:30px;width:1px;height:14px;background:#d4d0c8"></div>
<div class="c" style="left:347px;width:72px;top:31px;color:#000">Flexible Car...</div>
<div class="a" style="left:454px;top:30px;width:1px;height:14px;background:#d4d0c8"></div>
<div class="c" style="left:422px;width:32px;top:31px;color:#000">Tue</div>
<div class="a" style="left:524px;top:30px;width:1px;height:14px;background:#d4d0c8"></div>
<div class="c" style="left:457px;width:67px;top:31px;color:#000">28/02/2017</div>
<div class="a" style="left:564px;top:30px;width:1px;height:14px;background:#d4d0c8"></div>
<div class="c" style="left:527px;width:37px;top:31px;color:#000">12:00</div>
<div class="a" style="left:599px;top:30px;width:1px;height:14px;background:#d4d0c8"></div>
<div class="c" style="left:567px;width:32px;top:31px;color:#000">Wed</div>
<div class="a" style="left:669px;top:30px;width:1px;height:14px;background:#d4d0c8"></div>
<div class="c" style="left:602px;width:67px;top:31px;color:#000">08/03/2017</div>
<div class="a" style="left:709px;top:30px;width:1px;height:14px;background:#d4d0c8"></div>
<div class="c" style="left:672px;width:37px;top:31px;color:#000">12:00</div>
<div class="a" style="left:734px;top:30px;width:1px;height:14px;background:#d4d0c8"></div>
<div class="c" style="left:711px;width:21px;text-align:right;top:31px;color:#000">8</div>
<div class="a" style="left:784px;top:30px;width:1px;height:14px;background:#d4d0c8"></div>
<div class="c" style="left:737px;width:47px;top:31px;color:#000">On Air...</div>
<div class="a" style="left:834px;top:30px;width:1px;height:14px;background:#d4d0c8"></div>
<div class="c" style="left:787px;width:47px;top:31px;color:#000">On Air...</div>
<div class="a" style="left:889px;top:30px;width:1px;height:14px;background:#d4d0c8"></div>
<div class="c" style="left:836px;width:51px;text-align:right;top:31px;color:#000">291.32</div>
<div class="a" style="left:954px;top:30px;width:1px;height:14px;background:#d4d0c8"></div>
<div class="c" style="left:891px;width:61px;text-align:right;top:31px;color:#000">291.32</div>
<div class="a" style="left:1029px;top:30px;width:1px;height:14px;background:#d4d0c8"></div>
<div class="c" style="left:957px;width:72px;top:31px;color:#000">Alamo</div>
<div class="a" style="left:1054px;top:30px;width:1px;height:14px;background:#d4d0c8"></div>
<div class="c" style="left:1032px;width:22px;top:31px;color:#000">yes</div>
<div class="a" style="left:1084px;top:30px;width:1px;height:14px;background:#d4d0c8"></div>
<div class="c" style="left:1057px;width:27px;top:31px;color:#000">auto</div>
<div class="a" style="left:0;top:45px;width:1085px;height:14px;background:#b3defd"></div>
<div class="a" style="left:0;top:59px;width:1353px;height:1px;background:#d4d0c8"></div>
<div class="a" style="left:119px;top:45px;width:1px;height:14px;background:#d4d0c8"></div>
<div class="c" style="left:2px;width:117px;top:46px;color:#000;font-size:10.5px">TOYOTA RAV4 OR SI...</div>
<div class="a" style="left:144px;top:45px;width:1px;height:14px;background:#d4d0c8"></div>
<div class="c" style="left:121px;width:21px;text-align:right;top:46px;color:#000">5</div>
<div class="a" style="left:344px;top:45px;width:1px;height:14px;background:#d4d0c8"></div>
<div class="c" style="left:147px;width:197px;top:46px;color:#000">SUV(Intermediate) - Gold - Plus Exces...</div>
<div class="a" style="left:419px;top:45px;width:1px;height:14px;background:#d4d0c8"></div>
<div class="c" style="left:347px;width:72px;top:46px;color:#000">Flexible Car...</div>
<div class="a" style="left:454px;top:45px;width:1px;height:14px;background:#d4d0c8"></div>
<div class="c" style="left:422px;width:32px;top:46px;color:#000">Tue</div>
<div class="a" style="left:524px;top:45px;width:1px;height:14px;background:#d4d0c8"></div>
<div class="c" style="left:457px;width:67px;top:46px;color:#000">28/02/2017</div>
<div class="a" style="left:564px;top:45px;width:1px;height:14px;background:#d4d0c8"></div>
<div class="c" style="left:527px;width:37px;top:46px;color:#000">12:00</div>
<div class="a" style="left:599px;top:45px;width:1px;height:14px;background:#d4d0c8"></div>
<div class="c" style="left:567px;width:32px;top:46px;color:#000">Wed</div>
<div class="a" style="left:669px;top:45px;width:1px;height:14px;background:#d4d0c8"></div>
<div class="c" style="left:602px;width:67px;top:46px;color:#000">08/03/2017</div>
<div class="a" style="left:709px;top:45px;width:1px;height:14px;background:#d4d0c8"></div>
<div class="c" style="left:672px;width:37px;top:46px;color:#000">12:00</div>
<div class="a" style="left:734px;top:45px;width:1px;height:14px;background:#d4d0c8"></div>
<div class="c" style="left:711px;width:21px;text-align:right;top:46px;color:#000">8</div>
<div class="a" style="left:784px;top:45px;width:1px;height:14px;background:#d4d0c8"></div>
<div class="c" style="left:737px;width:47px;top:46px;color:#000">On Air...</div>
<div class="a" style="left:834px;top:45px;width:1px;height:14px;background:#d4d0c8"></div>
<div class="c" style="left:787px;width:47px;top:46px;color:#000">On Air...</div>
<div class="a" style="left:889px;top:45px;width:1px;height:14px;background:#d4d0c8"></div>
<div class="c" style="left:836px;width:51px;text-align:right;top:46px;color:#000">310.46</div>
<div class="a" style="left:954px;top:45px;width:1px;height:14px;background:#d4d0c8"></div>
<div class="c" style="left:891px;width:61px;text-align:right;top:46px;color:#000">310.46</div>
<div class="a" style="left:1029px;top:45px;width:1px;height:14px;background:#d4d0c8"></div>
<div class="c" style="left:957px;width:72px;top:46px;color:#000">Alamo</div>
<div class="a" style="left:1054px;top:45px;width:1px;height:14px;background:#d4d0c8"></div>
<div class="c" style="left:1032px;width:22px;top:46px;color:#000">yes</div>
<div class="a" style="left:1084px;top:45px;width:1px;height:14px;background:#d4d0c8"></div>
<div class="c" style="left:1057px;width:27px;top:46px;color:#000">auto</div>
<div class="a" style="left:0;top:60px;width:1085px;height:14px;background:#b3defd"></div>
<div class="a" style="left:0;top:74px;width:1353px;height:1px;background:#d4d0c8"></div>
<div class="a" style="left:119px;top:60px;width:1px;height:14px;background:#d4d0c8"></div>
<div class="c" style="left:2px;width:117px;top:61px;color:#000;font-size:10.5px">GMC TERRAIN OR SI...</div>
<div class="a" style="left:144px;top:60px;width:1px;height:14px;background:#d4d0c8"></div>
<div class="c" style="left:121px;width:21px;text-align:right;top:61px;color:#000">5</div>
<div class="a" style="left:344px;top:60px;width:1px;height:14px;background:#d4d0c8"></div>
<div class="c" style="left:147px;width:197px;top:61px;color:#000">SUV(Standard) - Inclusive product</div>
<div class="a" style="left:419px;top:60px;width:1px;height:14px;background:#d4d0c8"></div>
<div class="c" style="left:347px;width:72px;top:61px;color:#000">Flexible Car...</div>
<div class="a" style="left:454px;top:60px;width:1px;height:14px;background:#d4d0c8"></div>
<div class="c" style="left:422px;width:32px;top:61px;color:#000">Tue</div>
<div class="a" style="left:524px;top:60px;width:1px;height:14px;background:#d4d0c8"></div>
<div class="c" style="left:457px;width:67px;top:61px;color:#000">28/02/2017</div>
<div class="a" style="left:564px;top:60px;width:1px;height:14px;background:#d4d0c8"></div>
<div class="c" style="left:527px;width:37px;top:61px;color:#000">12:00</div>
<div class="a" style="left:599px;top:60px;width:1px;height:14px;background:#d4d0c8"></div>
<div class="c" style="left:567px;width:32px;top:61px;color:#000">Wed</div>
<div class="a" style="left:669px;top:60px;width:1px;height:14px;background:#d4d0c8"></div>
<div class="c" style="left:602px;width:67px;top:61px;color:#000">08/03/2017</div>
<div class="a" style="left:709px;top:60px;width:1px;height:14px;background:#d4d0c8"></div>
<div class="c" style="left:672px;width:37px;top:61px;color:#000">12:00</div>
<div class="a" style="left:734px;top:60px;width:1px;height:14px;background:#d4d0c8"></div>
<div class="c" style="left:711px;width:21px;text-align:right;top:61px;color:#000">8</div>
<div class="a" style="left:784px;top:60px;width:1px;height:14px;background:#d4d0c8"></div>
<div class="c" style="left:737px;width:47px;top:61px;color:#000">On Air...</div>
<div class="a" style="left:834px;top:60px;width:1px;height:14px;background:#d4d0c8"></div>
<div class="c" style="left:787px;width:47px;top:61px;color:#000">On Air...</div>
<div class="a" style="left:889px;top:60px;width:1px;height:14px;background:#d4d0c8"></div>
<div class="c" style="left:836px;width:51px;text-align:right;top:61px;color:#000">310.52</div>
<div class="a" style="left:954px;top:60px;width:1px;height:14px;background:#d4d0c8"></div>
<div class="c" style="left:891px;width:61px;text-align:right;top:61px;color:#000">310.52</div>
<div class="a" style="left:1029px;top:60px;width:1px;height:14px;background:#d4d0c8"></div>
<div class="c" style="left:957px;width:72px;top:61px;color:#000">Alamo</div>
<div class="a" style="left:1054px;top:60px;width:1px;height:14px;background:#d4d0c8"></div>
<div class="c" style="left:1032px;width:22px;top:61px;color:#000">yes</div>
<div class="a" style="left:1084px;top:60px;width:1px;height:14px;background:#d4d0c8"></div>
<div class="c" style="left:1057px;width:27px;top:61px;color:#000">auto</div>
<div class="a" style="left:0;top:75px;width:1085px;height:14px;background:#b3defd"></div>
<div class="a" style="left:0;top:89px;width:1353px;height:1px;background:#d4d0c8"></div>
<div class="a" style="left:119px;top:75px;width:1px;height:14px;background:#d4d0c8"></div>
<div class="c" style="left:2px;width:117px;top:76px;color:#000;font-size:10.5px">TOYOTA RAV4 OR SI...</div>
<div class="a" style="left:144px;top:75px;width:1px;height:14px;background:#d4d0c8"></div>
<div class="c" style="left:121px;width:21px;text-align:right;top:76px;color:#000">5</div>
<div class="a" style="left:344px;top:75px;width:1px;height:14px;background:#d4d0c8"></div>
<div class="c" style="left:147px;width:197px;top:76px;color:#000">SUV(Intermediate) - Inclusive GPS</div>
<div class="a" style="left:419px;top:75px;width:1px;height:14px;background:#d4d0c8"></div>
<div class="c" style="left:347px;width:72px;top:76px;color:#000">Flexible Car...</div>
<div class="a" style="left:454px;top:75px;width:1px;height:14px;background:#d4d0c8"></div>
<div class="c" style="left:422px;width:32px;top:76px;color:#000">Tue</div>
<div class="a" style="left:524px;top:75px;width:1px;height:14px;background:#d4d0c8"></div>
<div class="c" style="left:457px;width:67px;top:76px;color:#000">28/02/2017</div>
<div class="a" style="left:564px;top:75px;width:1px;height:14px;background:#d4d0c8"></div>
<div class="c" style="left:527px;width:37px;top:76px;color:#000">12:00</div>
<div class="a" style="left:599px;top:75px;width:1px;height:14px;background:#d4d0c8"></div>
<div class="c" style="left:567px;width:32px;top:76px;color:#000">Wed</div>
<div class="a" style="left:669px;top:75px;width:1px;height:14px;background:#d4d0c8"></div>
<div class="c" style="left:602px;width:67px;top:76px;color:#000">08/03/2017</div>
<div class="a" style="left:709px;top:75px;width:1px;height:14px;background:#d4d0c8"></div>
<div class="c" style="left:672px;width:37px;top:76px;color:#000">12:00</div>
<div class="a" style="left:734px;top:75px;width:1px;height:14px;background:#d4d0c8"></div>
<div class="c" style="left:711px;width:21px;text-align:right;top:76px;color:#000">8</div>
<div class="a" style="left:784px;top:75px;width:1px;height:14px;background:#d4d0c8"></div>
<div class="c" style="left:737px;width:47px;top:76px;color:#000">On Air...</div>
<div class="a" style="left:834px;top:75px;width:1px;height:14px;background:#d4d0c8"></div>
<div class="c" style="left:787px;width:47px;top:76px;color:#000">On Air...</div>
<div class="a" style="left:889px;top:75px;width:1px;height:14px;background:#d4d0c8"></div>
<div class="c" style="left:836px;width:51px;text-align:right;top:76px;color:#000">319.34</div>
<div class="a" style="left:954px;top:75px;width:1px;height:14px;background:#d4d0c8"></div>
<div class="c" style="left:891px;width:61px;text-align:right;top:76px;color:#000">319.34</div>
<div class="a" style="left:1029px;top:75px;width:1px;height:14px;background:#d4d0c8"></div>
<div class="c" style="left:957px;width:72px;top:76px;color:#000">Alamo</div>
<div class="a" style="left:1054px;top:75px;width:1px;height:14px;background:#d4d0c8"></div>
<div class="c" style="left:1032px;width:22px;top:76px;color:#000">yes</div>
<div class="a" style="left:1084px;top:75px;width:1px;height:14px;background:#d4d0c8"></div>
<div class="c" style="left:1057px;width:27px;top:76px;color:#000">auto</div>
<div class="a" style="left:0;top:90px;width:1085px;height:14px;background:#b3defd"></div>
<div class="a" style="left:0;top:104px;width:1353px;height:1px;background:#d4d0c8"></div>
<div class="a" style="left:119px;top:90px;width:1px;height:14px;background:#d4d0c8"></div>
<div class="c" style="left:2px;width:117px;top:91px;color:#000;font-size:10.5px">GMC TERRAIN OR SI...</div>
<div class="a" style="left:144px;top:90px;width:1px;height:14px;background:#d4d0c8"></div>
<div class="c" style="left:121px;width:21px;text-align:right;top:91px;color:#000">5</div>
<div class="a" style="left:344px;top:90px;width:1px;height:14px;background:#d4d0c8"></div>
<div class="c" style="left:147px;width:197px;top:91px;color:#000">SUV(Standard) - Inclusive product</div>
<div class="a" style="left:419px;top:90px;width:1px;height:14px;background:#d4d0c8"></div>
<div class="c" style="left:347px;width:72px;top:91px;color:#000">Flexible Car...</div>
<div class="a" style="left:454px;top:90px;width:1px;height:14px;background:#d4d0c8"></div>
<div class="c" style="left:422px;width:32px;top:91px;color:#000">Tue</div>
<div class="a" style="left:524px;top:90px;width:1px;height:14px;background:#d4d0c8"></div>
<div class="c" style="left:457px;width:67px;top:91px;color:#000">28/02/2017</div>
<div class="a" style="left:564px;top:90px;width:1px;height:14px;background:#d4d0c8"></div>
<div class="c" style="left:527px;width:37px;top:91px;color:#000">12:00</div>
<div class="a" style="left:599px;top:90px;width:1px;height:14px;background:#d4d0c8"></div>
<div class="c" style="left:567px;width:32px;top:91px;color:#000">Wed</div>
<div class="a" style="left:669px;top:90px;width:1px;height:14px;background:#d4d0c8"></div>
<div class="c" style="left:602px;width:67px;top:91px;color:#000">08/03/2017</div>
<div class="a" style="left:709px;top:90px;width:1px;height:14px;background:#d4d0c8"></div>
<div class="c" style="left:672px;width:37px;top:91px;color:#000">12:00</div>
<div class="a" style="left:734px;top:90px;width:1px;height:14px;background:#d4d0c8"></div>
<div class="c" style="left:711px;width:21px;text-align:right;top:91px;color:#000">8</div>
<div class="a" style="left:784px;top:90px;width:1px;height:14px;background:#d4d0c8"></div>
<div class="c" style="left:737px;width:47px;top:91px;color:#000">On Air...</div>
<div class="a" style="left:834px;top:90px;width:1px;height:14px;background:#d4d0c8"></div>
<div class="c" style="left:787px;width:47px;top:91px;color:#000">On Air...</div>
<div class="a" style="left:889px;top:90px;width:1px;height:14px;background:#d4d0c8"></div>
<div class="c" style="left:836px;width:51px;text-align:right;top:91px;color:#000">321.20</div>
<div class="a" style="left:954px;top:90px;width:1px;height:14px;background:#d4d0c8"></div>
<div class="c" style="left:891px;width:61px;text-align:right;top:91px;color:#000">321.20</div>
<div class="a" style="left:1029px;top:90px;width:1px;height:14px;background:#d4d0c8"></div>
<div class="c" style="left:957px;width:72px;top:91px;color:#000">National</div>
<div class="a" style="left:1054px;top:90px;width:1px;height:14px;background:#d4d0c8"></div>
<div class="c" style="left:1032px;width:22px;top:91px;color:#000">yes</div>
<div class="a" style="left:1084px;top:90px;width:1px;height:14px;background:#d4d0c8"></div>
<div class="c" style="left:1057px;width:27px;top:91px;color:#000">auto</div>
<div class="a" style="left:0;top:105px;width:1085px;height:14px;background:#b3defd"></div>
<div class="a" style="left:0;top:119px;width:1353px;height:1px;background:#d4d0c8"></div>
<div class="a" style="left:119px;top:105px;width:1px;height:14px;background:#d4d0c8"></div>
<div class="c" style="left:2px;width:117px;top:106px;color:#000;font-size:10.5px">TOYOTA RAV4 OR SI...</div>
<div class="a" style="left:144px;top:105px;width:1px;height:14px;background:#d4d0c8"></div>
<div class="c" style="left:121px;width:21px;text-align:right;top:106px;color:#000">5</div>
<div class="a" style="left:344px;top:105px;width:1px;height:14px;background:#d4d0c8"></div>
<div class="c" style="left:147px;width:197px;top:106px;color:#000">SUV(Intermediate) - Gold GPS</div>
<div class="a" style="left:419px;top:105px;width:1px;height:14px;background:#d4d0c8"></div>
<div class="c" style="left:347px;width:72px;top:106px;color:#000">Flexible Car...</div>
<div class="a" style="left:454px;top:105px;width:1px;height:14px;background:#d4d0c8"></div>
<div class="c" style="left:422px;width:32px;top:106px;color:#000">Tue</div>
<div class="a" style="left:524px;top:105px;width:1px;height:14px;background:#d4d0c8"></div>
<div class="c" style="left:457px;width:67px;top:106px;color:#000">28/02/2017</div>
<div class="a" style="left:564px;top:105px;width:1px;height:14px;background:#d4d0c8"></div>
<div class="c" style="left:527px;width:37px;top:106px;color:#000">12:00</div>
<div class="a" style="left:599px;top:105px;width:1px;height:14px;background:#d4d0c8"></div>
<div class="c" style="left:567px;width:32px;top:106px;color:#000">Wed</div>
<div class="a" style="left:669px;top:105px;width:1px;height:14px;background:#d4d0c8"></div>
<div class="c" style="left:602px;width:67px;top:106px;color:#000">08/03/2017</div>
<div class="a" style="left:709px;top:105px;width:1px;height:14px;background:#d4d0c8"></div>
<div class="c" style="left:672px;width:37px;top:106px;color:#000">12:00</div>
<div class="a" style="left:734px;top:105px;width:1px;height:14px;background:#d4d0c8"></div>
<div class="c" style="left:711px;width:21px;text-align:right;top:106px;color:#000">8</div>
<div class="a" style="left:784px;top:105px;width:1px;height:14px;background:#d4d0c8"></div>
<div class="c" style="left:737px;width:47px;top:106px;color:#000">On Air...</div>
<div class="a" style="left:834px;top:105px;width:1px;height:14px;background:#d4d0c8"></div>
<div class="c" style="left:787px;width:47px;top:106px;color:#000">On Air...</div>
<div class="a" style="left:889px;top:105px;width:1px;height:14px;background:#d4d0c8"></div>
<div class="c" style="left:836px;width:51px;text-align:right;top:106px;color:#000">323.46</div>
<div class="a" style="left:954px;top:105px;width:1px;height:14px;background:#d4d0c8"></div>
<div class="c" style="left:891px;width:61px;text-align:right;top:106px;color:#000">323.46</div>
<div class="a" style="left:1029px;top:105px;width:1px;height:14px;background:#d4d0c8"></div>
<div class="c" style="left:957px;width:72px;top:106px;color:#000">Alamo</div>
<div class="a" style="left:1054px;top:105px;width:1px;height:14px;background:#d4d0c8"></div>
<div class="c" style="left:1032px;width:22px;top:106px;color:#000">yes</div>
<div class="a" style="left:1084px;top:105px;width:1px;height:14px;background:#d4d0c8"></div>
<div class="c" style="left:1057px;width:27px;top:106px;color:#000">auto</div>
<div class="a" style="left:0;top:120px;width:1085px;height:14px;background:#b3defd"></div>
<div class="a" style="left:0;top:134px;width:1353px;height:1px;background:#d4d0c8"></div>
<div class="a" style="left:119px;top:120px;width:1px;height:14px;background:#d4d0c8"></div>
<div class="c" style="left:2px;width:117px;top:121px;color:#000;font-size:10.5px">GMC TERRAIN OR SI...</div>
<div class="a" style="left:144px;top:120px;width:1px;height:14px;background:#d4d0c8"></div>
<div class="c" style="left:121px;width:21px;text-align:right;top:121px;color:#000">5</div>
<div class="a" style="left:344px;top:120px;width:1px;height:14px;background:#d4d0c8"></div>
<div class="c" style="left:147px;width:197px;top:121px;color:#000">SUV(Standard) - Inclusive product - Pl...</div>
<div class="a" style="left:419px;top:120px;width:1px;height:14px;background:#d4d0c8"></div>
<div class="c" style="left:347px;width:72px;top:121px;color:#000">Flexible Car...</div>
<div class="a" style="left:454px;top:120px;width:1px;height:14px;background:#d4d0c8"></div>
<div class="c" style="left:422px;width:32px;top:121px;color:#000">Tue</div>
<div class="a" style="left:524px;top:120px;width:1px;height:14px;background:#d4d0c8"></div>
<div class="c" style="left:457px;width:67px;top:121px;color:#000">28/02/2017</div>
<div class="a" style="left:564px;top:120px;width:1px;height:14px;background:#d4d0c8"></div>
<div class="c" style="left:527px;width:37px;top:121px;color:#000">12:00</div>
<div class="a" style="left:599px;top:120px;width:1px;height:14px;background:#d4d0c8"></div>
<div class="c" style="left:567px;width:32px;top:121px;color:#000">Wed</div>
<div class="a" style="left:669px;top:120px;width:1px;height:14px;background:#d4d0c8"></div>
<div class="c" style="left:602px;width:67px;top:121px;color:#000">08/03/2017</div>
<div class="a" style="left:709px;top:120px;width:1px;height:14px;background:#d4d0c8"></div>
<div class="c" style="left:672px;width:37px;top:121px;color:#000">12:00</div>
<div class="a" style="left:734px;top:120px;width:1px;height:14px;background:#d4d0c8"></div>
<div class="c" style="left:711px;width:21px;text-align:right;top:121px;color:#000">8</div>
<div class="a" style="left:784px;top:120px;width:1px;height:14px;background:#d4d0c8"></div>
<div class="c" style="left:737px;width:47px;top:121px;color:#000">On Air...</div>
<div class="a" style="left:834px;top:120px;width:1px;height:14px;background:#d4d0c8"></div>
<div class="c" style="left:787px;width:47px;top:121px;color:#000">On Air...</div>
<div class="a" style="left:889px;top:120px;width:1px;height:14px;background:#d4d0c8"></div>
<div class="c" style="left:836px;width:51px;text-align:right;top:121px;color:#000">329.66</div>
<div class="a" style="left:954px;top:120px;width:1px;height:14px;background:#d4d0c8"></div>
<div class="c" style="left:891px;width:61px;text-align:right;top:121px;color:#000">329.66</div>
<div class="a" style="left:1029px;top:120px;width:1px;height:14px;background:#d4d0c8"></div>
<div class="c" style="left:957px;width:72px;top:121px;color:#000">Alamo</div>
<div class="a" style="left:1054px;top:120px;width:1px;height:14px;background:#d4d0c8"></div>
<div class="c" style="left:1032px;width:22px;top:121px;color:#000">yes</div>
<div class="a" style="left:1084px;top:120px;width:1px;height:14px;background:#d4d0c8"></div>
<div class="c" style="left:1057px;width:27px;top:121px;color:#000">auto</div>
<div class="a" style="left:0;top:135px;width:1085px;height:14px;background:#b3defd"></div>
<div class="a" style="left:0;top:149px;width:1353px;height:1px;background:#d4d0c8"></div>
<div class="a" style="left:119px;top:135px;width:1px;height:14px;background:#d4d0c8"></div>
<div class="c" style="left:2px;width:117px;top:136px;color:#000;font-size:10.5px">TOYOTA RAV4 OR SI...</div>
<div class="a" style="left:144px;top:135px;width:1px;height:14px;background:#d4d0c8"></div>
<div class="c" style="left:121px;width:21px;text-align:right;top:136px;color:#000">5</div>
<div class="a" style="left:344px;top:135px;width:1px;height:14px;background:#d4d0c8"></div>
<div class="c" style="left:147px;width:197px;top:136px;color:#000">SUV(Intermediate) - Inclusive GPS - Pl...</div>
<div class="a" style="left:419px;top:135px;width:1px;height:14px;background:#d4d0c8"></div>
<div class="c" style="left:347px;width:72px;top:136px;color:#000">Flexible Car...</div>
<div class="a" style="left:454px;top:135px;width:1px;height:14px;background:#d4d0c8"></div>
<div class="c" style="left:422px;width:32px;top:136px;color:#000">Tue</div>
<div class="a" style="left:524px;top:135px;width:1px;height:14px;background:#d4d0c8"></div>
<div class="c" style="left:457px;width:67px;top:136px;color:#000">28/02/2017</div>
<div class="a" style="left:564px;top:135px;width:1px;height:14px;background:#d4d0c8"></div>
<div class="c" style="left:527px;width:37px;top:136px;color:#000">12:00</div>
<div class="a" style="left:599px;top:135px;width:1px;height:14px;background:#d4d0c8"></div>
<div class="c" style="left:567px;width:32px;top:136px;color:#000">Wed</div>
<div class="a" style="left:669px;top:135px;width:1px;height:14px;background:#d4d0c8"></div>
<div class="c" style="left:602px;width:67px;top:136px;color:#000">08/03/2017</div>
<div class="a" style="left:709px;top:135px;width:1px;height:14px;background:#d4d0c8"></div>
<div class="c" style="left:672px;width:37px;top:136px;color:#000">12:00</div>
<div class="a" style="left:734px;top:135px;width:1px;height:14px;background:#d4d0c8"></div>
<div class="c" style="left:711px;width:21px;text-align:right;top:136px;color:#000">8</div>
<div class="a" style="left:784px;top:135px;width:1px;height:14px;background:#d4d0c8"></div>
<div class="c" style="left:737px;width:47px;top:136px;color:#000">On Air...</div>
<div class="a" style="left:834px;top:135px;width:1px;height:14px;background:#d4d0c8"></div>
<div class="c" style="left:787px;width:47px;top:136px;color:#000">On Air...</div>
<div class="a" style="left:889px;top:135px;width:1px;height:14px;background:#d4d0c8"></div>
<div class="c" style="left:836px;width:51px;text-align:right;top:136px;color:#000">338.47</div>
<div class="a" style="left:954px;top:135px;width:1px;height:14px;background:#d4d0c8"></div>
<div class="c" style="left:891px;width:61px;text-align:right;top:136px;color:#000">338.47</div>
<div class="a" style="left:1029px;top:135px;width:1px;height:14px;background:#d4d0c8"></div>
<div class="c" style="left:957px;width:72px;top:136px;color:#000">Alamo</div>
<div class="a" style="left:1054px;top:135px;width:1px;height:14px;background:#d4d0c8"></div>
<div class="c" style="left:1032px;width:22px;top:136px;color:#000">yes</div>
<div class="a" style="left:1084px;top:135px;width:1px;height:14px;background:#d4d0c8"></div>
<div class="c" style="left:1057px;width:27px;top:136px;color:#000">auto</div>
<div class="a" style="left:0;top:150px;width:1085px;height:14px;background:#b3defd"></div>
<div class="a" style="left:0;top:164px;width:1353px;height:1px;background:#d4d0c8"></div>
<div class="a" style="left:119px;top:150px;width:1px;height:14px;background:#d4d0c8"></div>
<div class="c" style="left:2px;width:117px;top:151px;color:#000;font-size:10.5px">GMC TERRAIN OR SI...</div>
<div class="a" style="left:144px;top:150px;width:1px;height:14px;background:#d4d0c8"></div>
<div class="c" style="left:121px;width:21px;text-align:right;top:151px;color:#000">5</div>
<div class="a" style="left:344px;top:150px;width:1px;height:14px;background:#d4d0c8"></div>
<div class="c" style="left:147px;width:197px;top:151px;color:#000">SUV(Standard) - Gold</div>
<div class="a" style="left:419px;top:150px;width:1px;height:14px;background:#d4d0c8"></div>
<div class="c" style="left:347px;width:72px;top:151px;color:#000">Flexible Car...</div>
<div class="a" style="left:454px;top:150px;width:1px;height:14px;background:#d4d0c8"></div>
<div class="c" style="left:422px;width:32px;top:151px;color:#000">Tue</div>
<div class="a" style="left:524px;top:150px;width:1px;height:14px;background:#d4d0c8"></div>
<div class="c" style="left:457px;width:67px;top:151px;color:#000">28/02/2017</div>
<div class="a" style="left:564px;top:150px;width:1px;height:14px;background:#d4d0c8"></div>
<div class="c" style="left:527px;width:37px;top:151px;color:#000">12:00</div>
<div class="a" style="left:599px;top:150px;width:1px;height:14px;background:#d4d0c8"></div>
<div class="c" style="left:567px;width:32px;top:151px;color:#000">Wed</div>
<div class="a" style="left:669px;top:150px;width:1px;height:14px;background:#d4d0c8"></div>
<div class="c" style="left:602px;width:67px;top:151px;color:#000">08/03/2017</div>
<div class="a" style="left:709px;top:150px;width:1px;height:14px;background:#d4d0c8"></div>
<div class="c" style="left:672px;width:37px;top:151px;color:#000">12:00</div>
<div class="a" style="left:734px;top:150px;width:1px;height:14px;background:#d4d0c8"></div>
<div class="c" style="left:711px;width:21px;text-align:right;top:151px;color:#000">8</div>
<div class="a" style="left:784px;top:150px;width:1px;height:14px;background:#d4d0c8"></div>
<div class="c" style="left:737px;width:47px;top:151px;color:#000">On Air...</div>
<div class="a" style="left:834px;top:150px;width:1px;height:14px;background:#d4d0c8"></div>
<div class="c" style="left:787px;width:47px;top:151px;color:#000">On Air...</div>
<div class="a" style="left:889px;top:150px;width:1px;height:14px;background:#d4d0c8"></div>
<div class="c" style="left:836px;width:51px;text-align:right;top:151px;color:#000">338.54</div>
<div class="a" style="left:954px;top:150px;width:1px;height:14px;background:#d4d0c8"></div>
<div class="c" style="left:891px;width:61px;text-align:right;top:151px;color:#000">338.54</div>
<div class="a" style="left:1029px;top:150px;width:1px;height:14px;background:#d4d0c8"></div>
<div class="c" style="left:957px;width:72px;top:151px;color:#000">Alamo</div>
<div class="a" style="left:1054px;top:150px;width:1px;height:14px;background:#d4d0c8"></div>
<div class="c" style="left:1032px;width:22px;top:151px;color:#000">yes</div>
<div class="a" style="left:1084px;top:150px;width:1px;height:14px;background:#d4d0c8"></div>
<div class="c" style="left:1057px;width:27px;top:151px;color:#000">auto</div>
<div class="a" style="left:0;top:165px;width:1085px;height:14px;background:#b3defd"></div>
<div class="a" style="left:0;top:179px;width:1353px;height:1px;background:#d4d0c8"></div>
<div class="a" style="left:119px;top:165px;width:1px;height:14px;background:#d4d0c8"></div>
<div class="c" style="left:2px;width:117px;top:166px;color:#000;font-size:10.5px">GMC TERRAIN OR SI...</div>
<div class="a" style="left:144px;top:165px;width:1px;height:14px;background:#d4d0c8"></div>
<div class="c" style="left:121px;width:21px;text-align:right;top:166px;color:#000">5</div>
<div class="a" style="left:344px;top:165px;width:1px;height:14px;background:#d4d0c8"></div>
<div class="c" style="left:147px;width:197px;top:166px;color:#000">SUV(Standard) - Inclusive product - Pl...</div>
<div class="a" style="left:419px;top:165px;width:1px;height:14px;background:#d4d0c8"></div>
<div class="c" style="left:347px;width:72px;top:166px;color:#000">Flexible Car...</div>
<div class="a" style="left:454px;top:165px;width:1px;height:14px;background:#d4d0c8"></div>
<div class="c" style="left:422px;width:32px;top:166px;color:#000">Tue</div>
<div class="a" style="left:524px;top:165px;width:1px;height:14px;background:#d4d0c8"></div>
<div class="c" style="left:457px;width:67px;top:166px;color:#000">28/02/2017</div>
<div class="a" style="left:564px;top:165px;width:1px;height:14px;background:#d4d0c8"></div>
<div class="c" style="left:527px;width:37px;top:166px;color:#000">12:00</div>
<div class="a" style="left:599px;top:165px;width:1px;height:14px;background:#d4d0c8"></div>
<div class="c" style="left:567px;width:32px;top:166px;color:#000">Wed</div>
<div class="a" style="left:669px;top:165px;width:1px;height:14px;background:#d4d0c8"></div>
<div class="c" style="left:602px;width:67px;top:166px;color:#000">08/03/2017</div>
<div class="a" style="left:709px;top:165px;width:1px;height:14px;background:#d4d0c8"></div>
<div class="c" style="left:672px;width:37px;top:166px;color:#000">12:00</div>
<div class="a" style="left:734px;top:165px;width:1px;height:14px;background:#d4d0c8"></div>
<div class="c" style="left:711px;width:21px;text-align:right;top:166px;color:#000">8</div>
<div class="a" style="left:784px;top:165px;width:1px;height:14px;background:#d4d0c8"></div>
<div class="c" style="left:737px;width:47px;top:166px;color:#000">On Air...</div>
<div class="a" style="left:834px;top:165px;width:1px;height:14px;background:#d4d0c8"></div>
<div class="c" style="left:787px;width:47px;top:166px;color:#000">On Air...</div>
<div class="a" style="left:889px;top:165px;width:1px;height:14px;background:#d4d0c8"></div>
<div class="c" style="left:836px;width:51px;text-align:right;top:166px;color:#000">340.34</div>
<div class="a" style="left:954px;top:165px;width:1px;height:14px;background:#d4d0c8"></div>
<div class="c" style="left:891px;width:61px;text-align:right;top:166px;color:#000">340.34</div>
<div class="a" style="left:1029px;top:165px;width:1px;height:14px;background:#d4d0c8"></div>
<div class="c" style="left:957px;width:72px;top:166px;color:#000">National</div>
<div class="a" style="left:1054px;top:165px;width:1px;height:14px;background:#d4d0c8"></div>
<div class="c" style="left:1032px;width:22px;top:166px;color:#000">yes</div>
<div class="a" style="left:1084px;top:165px;width:1px;height:14px;background:#d4d0c8"></div>
<div class="c" style="left:1057px;width:27px;top:166px;color:#000">auto</div>
<div class="a" style="left:0;top:180px;width:1085px;height:14px;background:#b3defd"></div>
<div class="a" style="left:0;top:194px;width:1353px;height:1px;background:#d4d0c8"></div>
<div class="a" style="left:119px;top:180px;width:1px;height:14px;background:#d4d0c8"></div>
<div class="c" style="left:2px;width:117px;top:181px;color:#000;font-size:10.5px">TOYOTA RAV4 OR SI...</div>
<div class="a" style="left:144px;top:180px;width:1px;height:14px;background:#d4d0c8"></div>
<div class="c" style="left:121px;width:21px;text-align:right;top:181px;color:#000">5</div>
<div class="a" style="left:344px;top:180px;width:1px;height:14px;background:#d4d0c8"></div>
<div class="c" style="left:147px;width:197px;top:181px;color:#000">SUV(Intermediate) - Gold GPS - Plus E...</div>
<div class="a" style="left:419px;top:180px;width:1px;height:14px;background:#d4d0c8"></div>
<div class="c" style="left:347px;width:72px;top:181px;color:#000">Flexible Car...</div>
<div class="a" style="left:454px;top:180px;width:1px;height:14px;background:#d4d0c8"></div>
<div class="c" style="left:422px;width:32px;top:181px;color:#000">Tue</div>
<div class="a" style="left:524px;top:180px;width:1px;height:14px;background:#d4d0c8"></div>
<div class="c" style="left:457px;width:67px;top:181px;color:#000">28/02/2017</div>
<div class="a" style="left:564px;top:180px;width:1px;height:14px;background:#d4d0c8"></div>
<div class="c" style="left:527px;width:37px;top:181px;color:#000">12:00</div>
<div class="a" style="left:599px;top:180px;width:1px;height:14px;background:#d4d0c8"></div>
<div class="c" style="left:567px;width:32px;top:181px;color:#000">Wed</div>
<div class="a" style="left:669px;top:180px;width:1px;height:14px;background:#d4d0c8"></div>
<div class="c" style="left:602px;width:67px;top:181px;color:#000">08/03/2017</div>
<div class="a" style="left:709px;top:180px;width:1px;height:14px;background:#d4d0c8"></div>
<div class="c" style="left:672px;width:37px;top:181px;color:#000">12:00</div>
<div class="a" style="left:734px;top:180px;width:1px;height:14px;background:#d4d0c8"></div>
<div class="c" style="left:711px;width:21px;text-align:right;top:181px;color:#000">8</div>
<div class="a" style="left:784px;top:180px;width:1px;height:14px;background:#d4d0c8"></div>
<div class="c" style="left:737px;width:47px;top:181px;color:#000">On Air...</div>
<div class="a" style="left:834px;top:180px;width:1px;height:14px;background:#d4d0c8"></div>
<div class="c" style="left:787px;width:47px;top:181px;color:#000">On Air...</div>
<div class="a" style="left:889px;top:180px;width:1px;height:14px;background:#d4d0c8"></div>
<div class="c" style="left:836px;width:51px;text-align:right;top:181px;color:#000">342.59</div>
<div class="a" style="left:954px;top:180px;width:1px;height:14px;background:#d4d0c8"></div>
<div class="c" style="left:891px;width:61px;text-align:right;top:181px;color:#000">342.59</div>
<div class="a" style="left:1029px;top:180px;width:1px;height:14px;background:#d4d0c8"></div>
<div class="c" style="left:957px;width:72px;top:181px;color:#000">Alamo</div>
<div class="a" style="left:1054px;top:180px;width:1px;height:14px;background:#d4d0c8"></div>
<div class="c" style="left:1032px;width:22px;top:181px;color:#000">yes</div>
<div class="a" style="left:1084px;top:180px;width:1px;height:14px;background:#d4d0c8"></div>
<div class="c" style="left:1057px;width:27px;top:181px;color:#000">auto</div>
<div class="a" style="left:0;top:195px;width:1085px;height:14px;background:#b3defd"></div>
<div class="a" style="left:0;top:209px;width:1353px;height:1px;background:#d4d0c8"></div>
<div class="a" style="left:119px;top:195px;width:1px;height:14px;background:#d4d0c8"></div>
<div class="c" style="left:2px;width:117px;top:196px;color:#000;font-size:10.5px">GMC TERRAIN OR SI...</div>
<div class="a" style="left:144px;top:195px;width:1px;height:14px;background:#d4d0c8"></div>
<div class="c" style="left:121px;width:21px;text-align:right;top:196px;color:#000">5</div>
<div class="a" style="left:344px;top:195px;width:1px;height:14px;background:#d4d0c8"></div>
<div class="c" style="left:147px;width:197px;top:196px;color:#000">SUV(Standard) - Gold</div>
<div class="a" style="left:419px;top:195px;width:1px;height:14px;background:#d4d0c8"></div>
<div class="c" style="left:347px;width:72px;top:196px;color:#000">Flexible Car...</div>
<div class="a" style="left:454px;top:195px;width:1px;height:14px;background:#d4d0c8"></div>
<div class="c" style="left:422px;width:32px;top:196px;color:#000">Tue</div>
<div class="a" style="left:524px;top:195px;width:1px;height:14px;background:#d4d0c8"></div>
<div class="c" style="left:457px;width:67px;top:196px;color:#000">28/02/2017</div>
<div class="a" style="left:564px;top:195px;width:1px;height:14px;background:#d4d0c8"></div>
<div class="c" style="left:527px;width:37px;top:196px;color:#000">12:00</div>
<div class="a" style="left:599px;top:195px;width:1px;height:14px;background:#d4d0c8"></div>
<div class="c" style="left:567px;width:32px;top:196px;color:#000">Wed</div>
<div class="a" style="left:669px;top:195px;width:1px;height:14px;background:#d4d0c8"></div>
<div class="c" style="left:602px;width:67px;top:196px;color:#000">08/03/2017</div>
<div class="a" style="left:709px;top:195px;width:1px;height:14px;background:#d4d0c8"></div>
<div class="c" style="left:672px;width:37px;top:196px;color:#000">12:00</div>
<div class="a" style="left:734px;top:195px;width:1px;height:14px;background:#d4d0c8"></div>
<div class="c" style="left:711px;width:21px;text-align:right;top:196px;color:#000">8</div>
<div class="a" style="left:784px;top:195px;width:1px;height:14px;background:#d4d0c8"></div>
<div class="c" style="left:737px;width:47px;top:196px;color:#000">On Air...</div>
<div class="a" style="left:834px;top:195px;width:1px;height:14px;background:#d4d0c8"></div>
<div class="c" style="left:787px;width:47px;top:196px;color:#000">On Air...</div>
<div class="a" style="left:889px;top:195px;width:1px;height:14px;background:#d4d0c8"></div>
<div class="c" style="left:836px;width:51px;text-align:right;top:196px;color:#000">353.20</div>
<div class="a" style="left:954px;top:195px;width:1px;height:14px;background:#d4d0c8"></div>
<div class="c" style="left:891px;width:61px;text-align:right;top:196px;color:#000">353.20</div>
<div class="a" style="left:1029px;top:195px;width:1px;height:14px;background:#d4d0c8"></div>
<div class="c" style="left:957px;width:72px;top:196px;color:#000">National</div>
<div class="a" style="left:1054px;top:195px;width:1px;height:14px;background:#d4d0c8"></div>
<div class="c" style="left:1032px;width:22px;top:196px;color:#000">yes</div>
<div class="a" style="left:1084px;top:195px;width:1px;height:14px;background:#d4d0c8"></div>
<div class="c" style="left:1057px;width:27px;top:196px;color:#000">auto</div>
<div class="a" style="left:0;top:210px;width:1085px;height:14px;background:#b3defd"></div>
<div class="a" style="left:0;top:224px;width:1353px;height:1px;background:#d4d0c8"></div>
<div class="a" style="left:119px;top:210px;width:1px;height:14px;background:#d4d0c8"></div>
<div class="c" style="left:2px;width:117px;top:211px;color:#000;font-size:10.5px">GMC TERRAIN OR SI...</div>
<div class="a" style="left:144px;top:210px;width:1px;height:14px;background:#d4d0c8"></div>
<div class="c" style="left:121px;width:21px;text-align:right;top:211px;color:#000">5</div>
<div class="a" style="left:344px;top:210px;width:1px;height:14px;background:#d4d0c8"></div>
<div class="c" style="left:147px;width:197px;top:211px;color:#000">SUV(Standard) - Gold - Plus Excess R...</div>
<div class="a" style="left:419px;top:210px;width:1px;height:14px;background:#d4d0c8"></div>
<div class="c" style="left:347px;width:72px;top:211px;color:#000">Flexible Car...</div>
<div class="a" style="left:454px;top:210px;width:1px;height:14px;background:#d4d0c8"></div>
<div class="c" style="left:422px;width:32px;top:211px;color:#000">Tue</div>
<div class="a" style="left:524px;top:210px;width:1px;height:14px;background:#d4d0c8"></div>
<div class="c" style="left:457px;width:67px;top:211px;color:#000">28/02/2017</div>
<div class="a" style="left:564px;top:210px;width:1px;height:14px;background:#d4d0c8"></div>
<div class="c" style="left:527px;width:37px;top:211px;color:#000">12:00</div>
<div class="a" style="left:599px;top:210px;width:1px;height:14px;background:#d4d0c8"></div>
<div class="c" style="left:567px;width:32px;top:211px;color:#000">Wed</div>
<div class="a" style="left:669px;top:210px;width:1px;height:14px;background:#d4d0c8"></div>
<div class="c" style="left:602px;width:67px;top:211px;color:#000">08/03/2017</div>
<div class="a" style="left:709px;top:210px;width:1px;height:14px;background:#d4d0c8"></div>
<div class="c" style="left:672px;width:37px;top:211px;color:#000">12:00</div>
<div class="a" style="left:734px;top:210px;width:1px;height:14px;background:#d4d0c8"></div>
<div class="c" style="left:711px;width:21px;text-align:right;top:211px;color:#000">8</div>
<div class="a" style="left:784px;top:210px;width:1px;height:14px;background:#d4d0c8"></div>
<div class="c" style="left:737px;width:47px;top:211px;color:#000">On Air...</div>
<div class="a" style="left:834px;top:210px;width:1px;height:14px;background:#d4d0c8"></div>
<div class="c" style="left:787px;width:47px;top:211px;color:#000">On Air...</div>
<div class="a" style="left:889px;top:210px;width:1px;height:14px;background:#d4d0c8"></div>
<div class="c" style="left:836px;width:51px;text-align:right;top:211px;color:#000">357.67</div>
<div class="a" style="left:954px;top:210px;width:1px;height:14px;background:#d4d0c8"></div>
<div class="c" style="left:891px;width:61px;text-align:right;top:211px;color:#000">357.67</div>
<div class="a" style="left:1029px;top:210px;width:1px;height:14px;background:#d4d0c8"></div>
<div class="c" style="left:957px;width:72px;top:211px;color:#000">Alamo</div>
<div class="a" style="left:1054px;top:210px;width:1px;height:14px;background:#d4d0c8"></div>
<div class="c" style="left:1032px;width:22px;top:211px;color:#000">yes</div>
<div class="a" style="left:1084px;top:210px;width:1px;height:14px;background:#d4d0c8"></div>
<div class="c" style="left:1057px;width:27px;top:211px;color:#000">auto</div>
<div class="a" style="left:0;top:225px;width:1085px;height:14px;background:#b3defd"></div>
<div class="a" style="left:0;top:239px;width:1353px;height:1px;background:#d4d0c8"></div>
<div class="a" style="left:119px;top:225px;width:1px;height:14px;background:#d4d0c8"></div>
<div class="c" style="left:2px;width:117px;top:226px;color:#000;font-size:10.5px">GMC TERRAIN OR SI...</div>
<div class="a" style="left:144px;top:225px;width:1px;height:14px;background:#d4d0c8"></div>
<div class="c" style="left:121px;width:21px;text-align:right;top:226px;color:#000">5</div>
<div class="a" style="left:344px;top:225px;width:1px;height:14px;background:#d4d0c8"></div>
<div class="c" style="left:147px;width:197px;top:226px;color:#000">SUV(Standard) - Inclusive GPS</div>
<div class="a" style="left:419px;top:225px;width:1px;height:14px;background:#d4d0c8"></div>
<div class="c" style="left:347px;width:72px;top:226px;color:#000">Flexible Car...</div>
<div class="a" style="left:454px;top:225px;width:1px;height:14px;background:#d4d0c8"></div>
<div class="c" style="left:422px;width:32px;top:226px;color:#000">Tue</div>
<div class="a" style="left:524px;top:225px;width:1px;height:14px;background:#d4d0c8"></div>
<div class="c" style="left:457px;width:67px;top:226px;color:#000">28/02/2017</div>
<div class="a" style="left:564px;top:225px;width:1px;height:14px;background:#d4d0c8"></div>
<div class="c" style="left:527px;width:37px;top:226px;color:#000">12:00</div>
<div class="a" style="left:599px;top:225px;width:1px;height:14px;background:#d4d0c8"></div>
<div class="c" style="left:567px;width:32px;top:226px;color:#000">Wed</div>
<div class="a" style="left:669px;top:225px;width:1px;height:14px;background:#d4d0c8"></div>
<div class="c" style="left:602px;width:67px;top:226px;color:#000">08/03/2017</div>
<div class="a" style="left:709px;top:225px;width:1px;height:14px;background:#d4d0c8"></div>
<div class="c" style="left:672px;width:37px;top:226px;color:#000">12:00</div>
<div class="a" style="left:734px;top:225px;width:1px;height:14px;background:#d4d0c8"></div>
<div class="c" style="left:711px;width:21px;text-align:right;top:226px;color:#000">8</div>
<div class="a" style="left:784px;top:225px;width:1px;height:14px;background:#d4d0c8"></div>
<div class="c" style="left:737px;width:47px;top:226px;color:#000">On Air...</div>
<div class="a" style="left:834px;top:225px;width:1px;height:14px;background:#d4d0c8"></div>
<div class="c" style="left:787px;width:47px;top:226px;color:#000">On Air...</div>
<div class="a" style="left:889px;top:225px;width:1px;height:14px;background:#d4d0c8"></div>
<div class="c" style="left:836px;width:51px;text-align:right;top:226px;color:#000">362.43</div>
<div class="a" style="left:954px;top:225px;width:1px;height:14px;background:#d4d0c8"></div>
<div class="c" style="left:891px;width:61px;text-align:right;top:226px;color:#000">362.43</div>
<div class="a" style="left:1029px;top:225px;width:1px;height:14px;background:#d4d0c8"></div>
<div class="c" style="left:957px;width:72px;top:226px;color:#000">Alamo</div>
<div class="a" style="left:1054px;top:225px;width:1px;height:14px;background:#d4d0c8"></div>
<div class="c" style="left:1032px;width:22px;top:226px;color:#000">yes</div>
<div class="a" style="left:1084px;top:225px;width:1px;height:14px;background:#d4d0c8"></div>
<div class="c" style="left:1057px;width:27px;top:226px;color:#000">auto</div>
<div class="a" style="left:0;top:240px;width:1085px;height:14px;background:#b3defd"></div>
<div class="a" style="left:0;top:254px;width:1353px;height:1px;background:#d4d0c8"></div>
<div class="a" style="left:119px;top:240px;width:1px;height:14px;background:#d4d0c8"></div>
<div class="c" style="left:2px;width:117px;top:241px;color:#000;font-size:10.5px">GMC TERRAIN OR SI...</div>
<div class="a" style="left:144px;top:240px;width:1px;height:14px;background:#d4d0c8"></div>
<div class="c" style="left:121px;width:21px;text-align:right;top:241px;color:#000">5</div>
<div class="a" style="left:344px;top:240px;width:1px;height:14px;background:#d4d0c8"></div>
<div class="c" style="left:147px;width:197px;top:241px;color:#000">SUV(Standard) - Inclusive GPS</div>
<div class="a" style="left:419px;top:240px;width:1px;height:14px;background:#d4d0c8"></div>
<div class="c" style="left:347px;width:72px;top:241px;color:#000">Flexible Car...</div>
<div class="a" style="left:454px;top:240px;width:1px;height:14px;background:#d4d0c8"></div>
<div class="c" style="left:422px;width:32px;top:241px;color:#000">Tue</div>
<div class="a" style="left:524px;top:240px;width:1px;height:14px;background:#d4d0c8"></div>
<div class="c" style="left:457px;width:67px;top:241px;color:#000">28/02/2017</div>
<div class="a" style="left:564px;top:240px;width:1px;height:14px;background:#d4d0c8"></div>
<div class="c" style="left:527px;width:37px;top:241px;color:#000">12:00</div>
<div class="a" style="left:599px;top:240px;width:1px;height:14px;background:#d4d0c8"></div>
<div class="c" style="left:567px;width:32px;top:241px;color:#000">Wed</div>
<div class="a" style="left:669px;top:240px;width:1px;height:14px;background:#d4d0c8"></div>
<div class="c" style="left:602px;width:67px;top:241px;color:#000">08/03/2017</div>
<div class="a" style="left:709px;top:240px;width:1px;height:14px;background:#d4d0c8"></div>
<div class="c" style="left:672px;width:37px;top:241px;color:#000">12:00</div>
<div class="a" style="left:734px;top:240px;width:1px;height:14px;background:#d4d0c8"></div>
<div class="c" style="left:711px;width:21px;text-align:right;top:241px;color:#000">8</div>
<div class="a" style="left:784px;top:240px;width:1px;height:14px;background:#d4d0c8"></div>
<div class="c" style="left:737px;width:47px;top:241px;color:#000">On Air...</div>
<div class="a" style="left:834px;top:240px;width:1px;height:14px;background:#d4d0c8"></div>
<div class="c" style="left:787px;width:47px;top:241px;color:#000">On Air...</div>
<div class="a" style="left:889px;top:240px;width:1px;height:14px;background:#d4d0c8"></div>
<div class="c" style="left:836px;width:51px;text-align:right;top:241px;color:#000">370.80</div>
<div class="a" style="left:954px;top:240px;width:1px;height:14px;background:#d4d0c8"></div>
<div class="c" style="left:891px;width:61px;text-align:right;top:241px;color:#000">370.80</div>
<div class="a" style="left:1029px;top:240px;width:1px;height:14px;background:#d4d0c8"></div>
<div class="c" style="left:957px;width:72px;top:241px;color:#000">National</div>
<div class="a" style="left:1054px;top:240px;width:1px;height:14px;background:#d4d0c8"></div>
<div class="c" style="left:1032px;width:22px;top:241px;color:#000">yes</div>
<div class="a" style="left:1084px;top:240px;width:1px;height:14px;background:#d4d0c8"></div>
<div class="c" style="left:1057px;width:27px;top:241px;color:#000">auto</div>
<div class="a" style="left:0;top:255px;width:1085px;height:14px;background:#b3defd"></div>
<div class="a" style="left:0;top:269px;width:1353px;height:1px;background:#d4d0c8"></div>
<div class="a" style="left:119px;top:255px;width:1px;height:14px;background:#d4d0c8"></div>
<div class="c" style="left:2px;width:117px;top:256px;color:#000;font-size:10.5px">GMC TERRAIN OR SI...</div>
<div class="a" style="left:144px;top:255px;width:1px;height:14px;background:#d4d0c8"></div>
<div class="c" style="left:121px;width:21px;text-align:right;top:256px;color:#000">5</div>
<div class="a" style="left:344px;top:255px;width:1px;height:14px;background:#d4d0c8"></div>
<div class="c" style="left:147px;width:197px;top:256px;color:#000">SUV(Standard) - Gold - Plus Excess R...</div>
<div class="a" style="left:419px;top:255px;width:1px;height:14px;background:#d4d0c8"></div>
<div class="c" style="left:347px;width:72px;top:256px;color:#000">Flexible Car...</div>
<div class="a" style="left:454px;top:255px;width:1px;height:14px;background:#d4d0c8"></div>
<div class="c" style="left:422px;width:32px;top:256px;color:#000">Tue</div>
<div class="a" style="left:524px;top:255px;width:1px;height:14px;background:#d4d0c8"></div>
<div class="c" style="left:457px;width:67px;top:256px;color:#000">28/02/2017</div>
<div class="a" style="left:564px;top:255px;width:1px;height:14px;background:#d4d0c8"></div>
<div class="c" style="left:527px;width:37px;top:256px;color:#000">12:00</div>
<div class="a" style="left:599px;top:255px;width:1px;height:14px;background:#d4d0c8"></div>
<div class="c" style="left:567px;width:32px;top:256px;color:#000">Wed</div>
<div class="a" style="left:669px;top:255px;width:1px;height:14px;background:#d4d0c8"></div>
<div class="c" style="left:602px;width:67px;top:256px;color:#000">08/03/2017</div>
<div class="a" style="left:709px;top:255px;width:1px;height:14px;background:#d4d0c8"></div>
<div class="c" style="left:672px;width:37px;top:256px;color:#000">12:00</div>
<div class="a" style="left:734px;top:255px;width:1px;height:14px;background:#d4d0c8"></div>
<div class="c" style="left:711px;width:21px;text-align:right;top:256px;color:#000">8</div>
<div class="a" style="left:784px;top:255px;width:1px;height:14px;background:#d4d0c8"></div>
<div class="c" style="left:737px;width:47px;top:256px;color:#000">On Air...</div>
<div class="a" style="left:834px;top:255px;width:1px;height:14px;background:#d4d0c8"></div>
<div class="c" style="left:787px;width:47px;top:256px;color:#000">On Air...</div>
<div class="a" style="left:889px;top:255px;width:1px;height:14px;background:#d4d0c8"></div>
<div class="c" style="left:836px;width:51px;text-align:right;top:256px;color:#000">372.34</div>
<div class="a" style="left:954px;top:255px;width:1px;height:14px;background:#d4d0c8"></div>
<div class="c" style="left:891px;width:61px;text-align:right;top:256px;color:#000">372.34</div>
<div class="a" style="left:1029px;top:255px;width:1px;height:14px;background:#d4d0c8"></div>
<div class="c" style="left:957px;width:72px;top:256px;color:#000">National</div>
<div class="a" style="left:1054px;top:255px;width:1px;height:14px;background:#d4d0c8"></div>
<div class="c" style="left:1032px;width:22px;top:256px;color:#000">yes</div>
<div class="a" style="left:1084px;top:255px;width:1px;height:14px;background:#d4d0c8"></div>
<div class="c" style="left:1057px;width:27px;top:256px;color:#000">auto</div>
<div class="a" style="left:0;top:270px;width:1085px;height:14px;background:#b3defd"></div>
<div class="a" style="left:0;top:284px;width:1353px;height:1px;background:#d4d0c8"></div>
<div class="a" style="left:119px;top:270px;width:1px;height:14px;background:#d4d0c8"></div>
<div class="c" style="left:2px;width:117px;top:271px;color:#000;font-size:10.5px">CHEVROLET TAHOE ...</div>
<div class="a" style="left:144px;top:270px;width:1px;height:14px;background:#d4d0c8"></div>
<div class="c" style="left:121px;width:21px;text-align:right;top:271px;color:#000">7</div>
<div class="a" style="left:344px;top:270px;width:1px;height:14px;background:#d4d0c8"></div>
<div class="c" style="left:147px;width:197px;top:271px;color:#000">SUV(Full Size) - Inclusive product</div>
<div class="a" style="left:419px;top:270px;width:1px;height:14px;background:#d4d0c8"></div>
<div class="c" style="left:347px;width:72px;top:271px;color:#000">Flexible Car...</div>
<div class="a" style="left:454px;top:270px;width:1px;height:14px;background:#d4d0c8"></div>
<div class="c" style="left:422px;width:32px;top:271px;color:#000">Tue</div>
<div class="a" style="left:524px;top:270px;width:1px;height:14px;background:#d4d0c8"></div>
<div class="c" style="left:457px;width:67px;top:271px;color:#000">28/02/2017</div>
<div class="a" style="left:564px;top:270px;width:1px;height:14px;background:#d4d0c8"></div>
<div class="c" style="left:527px;width:37px;top:271px;color:#000">12:00</div>
<div class="a" style="left:599px;top:270px;width:1px;height:14px;background:#d4d0c8"></div>
<div class="c" style="left:567px;width:32px;top:271px;color:#000">Wed</div>
<div class="a" style="left:669px;top:270px;width:1px;height:14px;background:#d4d0c8"></div>
<div class="c" style="left:602px;width:67px;top:271px;color:#000">08/03/2017</div>
<div class="a" style="left:709px;top:270px;width:1px;height:14px;background:#d4d0c8"></div>
<div class="c" style="left:672px;width:37px;top:271px;color:#000">12:00</div>
<div class="a" style="left:734px;top:270px;width:1px;height:14px;background:#d4d0c8"></div>
<div class="c" style="left:711px;width:21px;text-align:right;top:271px;color:#000">8</div>
<div class="a" style="left:784px;top:270px;width:1px;height:14px;background:#d4d0c8"></div>
<div class="c" style="left:737px;width:47px;top:271px;color:#000">On Air...</div>
<div class="a" style="left:834px;top:270px;width:1px;height:14px;background:#d4d0c8"></div>
<div class="c" style="left:787px;width:47px;top:271px;color:#000">On Air...</div>
<div class="a" style="left:889px;top:270px;width:1px;height:14px;background:#d4d0c8"></div>
<div class="c" style="left:836px;width:51px;text-align:right;top:271px;color:#000">377.26</div>
<div class="a" style="left:954px;top:270px;width:1px;height:14px;background:#d4d0c8"></div>
<div class="c" style="left:891px;width:61px;text-align:right;top:271px;color:#000">377.26</div>
<div class="a" style="left:1029px;top:270px;width:1px;height:14px;background:#d4d0c8"></div>
<div class="c" style="left:957px;width:72px;top:271px;color:#000">Alamo</div>
<div class="a" style="left:1054px;top:270px;width:1px;height:14px;background:#d4d0c8"></div>
<div class="c" style="left:1032px;width:22px;top:271px;color:#000">yes</div>
<div class="a" style="left:1084px;top:270px;width:1px;height:14px;background:#d4d0c8"></div>
<div class="c" style="left:1057px;width:27px;top:271px;color:#000">auto</div>
<div class="a" style="left:0;top:285px;width:1085px;height:14px;background:#b3defd"></div>
<div class="a" style="left:0;top:299px;width:1353px;height:1px;background:#d4d0c8"></div>
<div class="a" style="left:119px;top:285px;width:1px;height:14px;background:#d4d0c8"></div>
<div class="c" style="left:2px;width:117px;top:286px;color:#000;font-size:10.5px">GMC TERRAIN OR SI...</div>
<div class="a" style="left:144px;top:285px;width:1px;height:14px;background:#d4d0c8"></div>
<div class="c" style="left:121px;width:21px;text-align:right;top:286px;color:#000">5</div>
<div class="a" style="left:344px;top:285px;width:1px;height:14px;background:#d4d0c8"></div>
<div class="c" style="left:147px;width:197px;top:286px;color:#000">SUV(Standard) - Inclusive GPS - Plus ...</div>
<div class="a" style="left:419px;top:285px;width:1px;height:14px;background:#d4d0c8"></div>
<div class="c" style="left:347px;width:72px;top:286px;color:#000">Flexible Car...</div>
<div class="a" style="left:454px;top:285px;width:1px;height:14px;background:#d4d0c8"></div>
<div class="c" style="left:422px;width:32px;top:286px;color:#000">Tue</div>
<div class="a" style="left:524px;top:285px;width:1px;height:14px;background:#d4d0c8"></div>
<div class="c" style="left:457px;width:67px;top:286px;color:#000">28/02/2017</div>
<div class="a" style="left:564px;top:285px;width:1px;height:14px;background:#d4d0c8"></div>
<div class="c" style="left:527px;width:37px;top:286px;color:#000">12:00</div>
<div class="a" style="left:599px;top:285px;width:1px;height:14px;background:#d4d0c8"></div>
<div class="c" style="left:567px;width:32px;top:286px;color:#000">Wed</div>
<div class="a" style="left:669px;top:285px;width:1px;height:14px;background:#d4d0c8"></div>
<div class="c" style="left:602px;width:67px;top:286px;color:#000">08/03/2017</div>
<div class="a" style="left:709px;top:285px;width:1px;height:14px;background:#d4d0c8"></div>
<div class="c" style="left:672px;width:37px;top:286px;color:#000">12:00</div>
<div class="a" style="left:734px;top:285px;width:1px;height:14px;background:#d4d0c8"></div>
<div class="c" style="left:711px;width:21px;text-align:right;top:286px;color:#000">8</div>
<div class="a" style="left:784px;top:285px;width:1px;height:14px;background:#d4d0c8"></div>
<div class="c" style="left:737px;width:47px;top:286px;color:#000">On Air...</div>
<div class="a" style="left:834px;top:285px;width:1px;height:14px;background:#d4d0c8"></div>
<div class="c" style="left:787px;width:47px;top:286px;color:#000">On Air...</div>
<div class="a" style="left:889px;top:285px;width:1px;height:14px;background:#d4d0c8"></div>
<div class="c" style="left:836px;width:51px;text-align:right;top:286px;color:#000">381.57</div>
<div class="a" style="left:954px;top:285px;width:1px;height:14px;background:#d4d0c8"></div>
<div class="c" style="left:891px;width:61px;text-align:right;top:286px;color:#000">381.57</div>
<div class="a" style="left:1029px;top:285px;width:1px;height:14px;background:#d4d0c8"></div>
<div class="c" style="left:957px;width:72px;top:286px;color:#000">Alamo</div>
<div class="a" style="left:1054px;top:285px;width:1px;height:14px;background:#d4d0c8"></div>
<div class="c" style="left:1032px;width:22px;top:286px;color:#000">yes</div>
<div class="a" style="left:1084px;top:285px;width:1px;height:14px;background:#d4d0c8"></div>
<div class="c" style="left:1057px;width:27px;top:286px;color:#000">auto</div>
<div class="a" style="left:0;top:300px;width:1085px;height:14px;background:#b3defd"></div>
<div class="a" style="left:0;top:314px;width:1353px;height:1px;background:#d4d0c8"></div>
<div class="a" style="left:119px;top:300px;width:1px;height:14px;background:#d4d0c8"></div>
<div class="c" style="left:2px;width:117px;top:301px;color:#000;font-size:10.5px">GMC TERRAIN OR SI...</div>
<div class="a" style="left:144px;top:300px;width:1px;height:14px;background:#d4d0c8"></div>
<div class="c" style="left:121px;width:21px;text-align:right;top:301px;color:#000">5</div>
<div class="a" style="left:344px;top:300px;width:1px;height:14px;background:#d4d0c8"></div>
<div class="c" style="left:147px;width:197px;top:301px;color:#000">SUV(Standard) - Gold GPS</div>
<div class="a" style="left:419px;top:300px;width:1px;height:14px;background:#d4d0c8"></div>
<div class="c" style="left:347px;width:72px;top:301px;color:#000">Flexible Car...</div>
<div class="a" style="left:454px;top:300px;width:1px;height:14px;background:#d4d0c8"></div>
<div class="c" style="left:422px;width:32px;top:301px;color:#000">Tue</div>
<div class="a" style="left:524px;top:300px;width:1px;height:14px;background:#d4d0c8"></div>
<div class="c" style="left:457px;width:67px;top:301px;color:#000">28/02/2017</div>
<div class="a" style="left:564px;top:300px;width:1px;height:14px;background:#d4d0c8"></div>
<div class="c" style="left:527px;width:37px;top:301px;color:#000">12:00</div>
<div class="a" style="left:599px;top:300px;width:1px;height:14px;background:#d4d0c8"></div>
<div class="c" style="left:567px;width:32px;top:301px;color:#000">Wed</div>
<div class="a" style="left:669px;top:300px;width:1px;height:14px;background:#d4d0c8"></div>
<div class="c" style="left:602px;width:67px;top:301px;color:#000">08/03/2017</div>
<div class="a" style="left:709px;top:300px;width:1px;height:14px;background:#d4d0c8"></div>
<div class="c" style="left:672px;width:37px;top:301px;color:#000">12:00</div>
<div class="a" style="left:734px;top:300px;width:1px;height:14px;background:#d4d0c8"></div>
<div class="c" style="left:711px;width:21px;text-align:right;top:301px;color:#000">8</div>
<div class="a" style="left:784px;top:300px;width:1px;height:14px;background:#d4d0c8"></div>
<div class="c" style="left:737px;width:47px;top:301px;color:#000">On Air...</div>
<div class="a" style="left:834px;top:300px;width:1px;height:14px;background:#d4d0c8"></div>
<div class="c" style="left:787px;width:47px;top:301px;color:#000">On Air...</div>
<div class="a" style="left:889px;top:300px;width:1px;height:14px;background:#d4d0c8"></div>
<div class="c" style="left:836px;width:51px;text-align:right;top:301px;color:#000">389.62</div>
<div class="a" style="left:954px;top:300px;width:1px;height:14px;background:#d4d0c8"></div>
<div class="c" style="left:891px;width:61px;text-align:right;top:301px;color:#000">389.62</div>
<div class="a" style="left:1029px;top:300px;width:1px;height:14px;background:#d4d0c8"></div>
<div class="c" style="left:957px;width:72px;top:301px;color:#000">Alamo</div>
<div class="a" style="left:1054px;top:300px;width:1px;height:14px;background:#d4d0c8"></div>
<div class="c" style="left:1032px;width:22px;top:301px;color:#000">yes</div>
<div class="a" style="left:1084px;top:300px;width:1px;height:14px;background:#d4d0c8"></div>
<div class="c" style="left:1057px;width:27px;top:301px;color:#000">auto</div>
<div class="a" style="left:0;top:315px;width:1085px;height:14px;background:#b3defd"></div>
<div class="a" style="left:0;top:329px;width:1353px;height:1px;background:#d4d0c8"></div>
<div class="a" style="left:119px;top:315px;width:1px;height:14px;background:#d4d0c8"></div>
<div class="c" style="left:2px;width:117px;top:316px;color:#000;font-size:10.5px">TOYOTA RAV4 OR SI...</div>
<div class="a" style="left:144px;top:315px;width:1px;height:14px;background:#d4d0c8"></div>
<div class="c" style="left:121px;width:21px;text-align:right;top:316px;color:#000">5</div>
<div class="a" style="left:344px;top:315px;width:1px;height:14px;background:#d4d0c8"></div>
<div class="c" style="left:147px;width:197px;top:316px;color:#000">SUV(Intermediate) - Inclusive product</div>
<div class="a" style="left:419px;top:315px;width:1px;height:14px;background:#d4d0c8"></div>
<div class="c" style="left:347px;width:72px;top:316px;color:#000">Flexible Car...</div>
<div class="a" style="left:454px;top:315px;width:1px;height:14px;background:#d4d0c8"></div>
<div class="c" style="left:422px;width:32px;top:316px;color:#000">Tue</div>
<div class="a" style="left:524px;top:315px;width:1px;height:14px;background:#d4d0c8"></div>
<div class="c" style="left:457px;width:67px;top:316px;color:#000">28/02/2017</div>
<div class="a" style="left:564px;top:315px;width:1px;height:14px;background:#d4d0c8"></div>
<div class="c" style="left:527px;width:37px;top:316px;color:#000">12:00</div>
<div class="a" style="left:599px;top:315px;width:1px;height:14px;background:#d4d0c8"></div>
<div class="c" style="left:567px;width:32px;top:316px;color:#000">Wed</div>
<div class="a" style="left:669px;top:315px;width:1px;height:14px;background:#d4d0c8"></div>
<div class="c" style="left:602px;width:67px;top:316px;color:#000">08/03/2017</div>
<div class="a" style="left:709px;top:315px;width:1px;height:14px;background:#d4d0c8"></div>
<div class="c" style="left:672px;width:37px;top:316px;color:#000">12:00</div>
<div class="a" style="left:734px;top:315px;width:1px;height:14px;background:#d4d0c8"></div>
<div class="c" style="left:711px;width:21px;text-align:right;top:316px;color:#000">8</div>
<div class="a" style="left:784px;top:315px;width:1px;height:14px;background:#d4d0c8"></div>
<div class="c" style="left:737px;width:47px;top:316px;color:#000">On Air...</div>
<div class="a" style="left:834px;top:315px;width:1px;height:14px;background:#d4d0c8"></div>
<div class="c" style="left:787px;width:47px;top:316px;color:#000">On Air...</div>
<div class="a" style="left:889px;top:315px;width:1px;height:14px;background:#d4d0c8"></div>
<div class="c" style="left:836px;width:51px;text-align:right;top:316px;color:#000">389.72</div>
<div class="a" style="left:954px;top:315px;width:1px;height:14px;background:#d4d0c8"></div>
<div class="c" style="left:891px;width:61px;text-align:right;top:316px;color:#000">389.72</div>
<div class="a" style="left:1029px;top:315px;width:1px;height:14px;background:#d4d0c8"></div>
<div class="c" style="left:957px;width:72px;top:316px;color:#000">Alamo</div>
<div class="a" style="left:1054px;top:315px;width:1px;height:14px;background:#d4d0c8"></div>
<div class="c" style="left:1032px;width:22px;top:316px;color:#000">yes</div>
<div class="a" style="left:1084px;top:315px;width:1px;height:14px;background:#d4d0c8"></div>
<div class="c" style="left:1057px;width:27px;top:316px;color:#000">auto</div>
<div class="a" style="left:0;top:330px;width:1085px;height:14px;background:#b3defd"></div>
<div class="a" style="left:0;top:344px;width:1353px;height:1px;background:#d4d0c8"></div>
<div class="a" style="left:119px;top:330px;width:1px;height:14px;background:#d4d0c8"></div>
<div class="c" style="left:2px;width:117px;top:331px;color:#000;font-size:10.5px">TOYOTA RAV4 OR SI...</div>
<div class="a" style="left:144px;top:330px;width:1px;height:14px;background:#d4d0c8"></div>
<div class="c" style="left:121px;width:21px;text-align:right;top:331px;color:#000">5</div>
<div class="a" style="left:344px;top:330px;width:1px;height:14px;background:#d4d0c8"></div>
<div class="c" style="left:147px;width:197px;top:331px;color:#000">SUV(Intermediate) - Young Driver (ag...</div>
<div class="a" style="left:419px;top:330px;width:1px;height:14px;background:#d4d0c8"></div>
<div class="c" style="left:347px;width:72px;top:331px;color:#000">Flexible Car...</div>
<div class="a" style="left:454px;top:330px;width:1px;height:14px;background:#d4d0c8"></div>
<div class="c" style="left:422px;width:32px;top:331px;color:#000">Tue</div>
<div class="a" style="left:524px;top:330px;width:1px;height:14px;background:#d4d0c8"></div>
<div class="c" style="left:457px;width:67px;top:331px;color:#000">28/02/2017</div>
<div class="a" style="left:564px;top:330px;width:1px;height:14px;background:#d4d0c8"></div>
<div class="c" style="left:527px;width:37px;top:331px;color:#000">12:00</div>
<div class="a" style="left:599px;top:330px;width:1px;height:14px;background:#d4d0c8"></div>
<div class="c" style="left:567px;width:32px;top:331px;color:#000">Wed</div>
<div class="a" style="left:669px;top:330px;width:1px;height:14px;background:#d4d0c8"></div>
<div class="c" style="left:602px;width:67px;top:331px;color:#000">08/03/2017</div>
<div class="a" style="left:709px;top:330px;width:1px;height:14px;background:#d4d0c8"></div>
<div class="c" style="left:672px;width:37px;top:331px;color:#000">12:00</div>
<div class="a" style="left:734px;top:330px;width:1px;height:14px;background:#d4d0c8"></div>
<div class="c" style="left:711px;width:21px;text-align:right;top:331px;color:#000">8</div>
<div class="a" style="left:784px;top:330px;width:1px;height:14px;background:#d4d0c8"></div>
<div class="c" style="left:737px;width:47px;top:331px;color:#000">On Air...</div>
<div class="a" style="left:834px;top:330px;width:1px;height:14px;background:#d4d0c8"></div>
<div class="c" style="left:787px;width:47px;top:331px;color:#000">On Air...</div>
<div class="a" style="left:889px;top:330px;width:1px;height:14px;background:#d4d0c8"></div>
<div class="c" style="left:836px;width:51px;text-align:right;top:331px;color:#000">389.72</div>
<div class="a" style="left:954px;top:330px;width:1px;height:14px;background:#d4d0c8"></div>
<div class="c" style="left:891px;width:61px;text-align:right;top:331px;color:#000">389.72</div>
<div class="a" style="left:1029px;top:330px;width:1px;height:14px;background:#d4d0c8"></div>
<div class="c" style="left:957px;width:72px;top:331px;color:#000">Alamo</div>
<div class="a" style="left:1054px;top:330px;width:1px;height:14px;background:#d4d0c8"></div>
<div class="c" style="left:1032px;width:22px;top:331px;color:#000">yes</div>
<div class="a" style="left:1084px;top:330px;width:1px;height:14px;background:#d4d0c8"></div>
<div class="c" style="left:1057px;width:27px;top:331px;color:#000">auto</div>
<div class="a" style="left:0;top:345px;width:1085px;height:14px;background:#b3defd"></div>
<div class="a" style="left:0;top:359px;width:1353px;height:1px;background:#d4d0c8"></div>
<div class="a" style="left:119px;top:345px;width:1px;height:14px;background:#d4d0c8"></div>
<div class="c" style="left:2px;width:117px;top:346px;color:#000;font-size:10.5px">GMC TERRAIN OR SI...</div>
<div class="a" style="left:144px;top:345px;width:1px;height:14px;background:#d4d0c8"></div>
<div class="c" style="left:121px;width:21px;text-align:right;top:346px;color:#000">5</div>
<div class="a" style="left:344px;top:345px;width:1px;height:14px;background:#d4d0c8"></div>
<div class="c" style="left:147px;width:197px;top:346px;color:#000">SUV(Standard) - Inclusive GPS - Plus ...</div>
<div class="a" style="left:419px;top:345px;width:1px;height:14px;background:#d4d0c8"></div>
<div class="c" style="left:347px;width:72px;top:346px;color:#000">Flexible Car...</div>
<div class="a" style="left:454px;top:345px;width:1px;height:14px;background:#d4d0c8"></div>
<div class="c" style="left:422px;width:32px;top:346px;color:#000">Tue</div>
<div class="a" style="left:524px;top:345px;width:1px;height:14px;background:#d4d0c8"></div>
<div class="c" style="left:457px;width:67px;top:346px;color:#000">28/02/2017</div>
<div class="a" style="left:564px;top:345px;width:1px;height:14px;background:#d4d0c8"></div>
<div class="c" style="left:527px;width:37px;top:346px;color:#000">12:00</div>
<div class="a" style="left:599px;top:345px;width:1px;height:14px;background:#d4d0c8"></div>
<div class="c" style="left:567px;width:32px;top:346px;color:#000">Wed</div>
<div class="a" style="left:669px;top:345px;width:1px;height:14px;background:#d4d0c8"></div>
<div class="c" style="left:602px;width:67px;top:346px;color:#000">08/03/2017</div>
<div class="a" style="left:709px;top:345px;width:1px;height:14px;background:#d4d0c8"></div>
<div class="c" style="left:672px;width:37px;top:346px;color:#000">12:00</div>
<div class="a" style="left:734px;top:345px;width:1px;height:14px;background:#d4d0c8"></div>
<div class="c" style="left:711px;width:21px;text-align:right;top:346px;color:#000">8</div>
<div class="a" style="left:784px;top:345px;width:1px;height:14px;background:#d4d0c8"></div>
<div class="c" style="left:737px;width:47px;top:346px;color:#000">On Air...</div>
<div class="a" style="left:834px;top:345px;width:1px;height:14px;background:#d4d0c8"></div>
<div class="c" style="left:787px;width:47px;top:346px;color:#000">On Air...</div>
<div class="a" style="left:889px;top:345px;width:1px;height:14px;background:#d4d0c8"></div>
<div class="c" style="left:836px;width:51px;text-align:right;top:346px;color:#000">389.94</div>
<div class="a" style="left:954px;top:345px;width:1px;height:14px;background:#d4d0c8"></div>
<div class="c" style="left:891px;width:61px;text-align:right;top:346px;color:#000">389.94</div>
<div class="a" style="left:1029px;top:345px;width:1px;height:14px;background:#d4d0c8"></div>
<div class="c" style="left:957px;width:72px;top:346px;color:#000">National</div>
<div class="a" style="left:1054px;top:345px;width:1px;height:14px;background:#d4d0c8"></div>
<div class="c" style="left:1032px;width:22px;top:346px;color:#000">yes</div>
<div class="a" style="left:1084px;top:345px;width:1px;height:14px;background:#d4d0c8"></div>
<div class="c" style="left:1057px;width:27px;top:346px;color:#000">auto</div>
<div class="a" style="left:0;top:360px;width:1085px;height:14px;background:#b3defd"></div>
<div class="a" style="left:0;top:374px;width:1353px;height:1px;background:#d4d0c8"></div>
<div class="a" style="left:119px;top:360px;width:1px;height:14px;background:#d4d0c8"></div>
<div class="c" style="left:2px;width:117px;top:361px;color:#000;font-size:10.5px">CHEVROLET TAHOE ...</div>
<div class="a" style="left:144px;top:360px;width:1px;height:14px;background:#d4d0c8"></div>
<div class="c" style="left:121px;width:21px;text-align:right;top:361px;color:#000">7</div>
<div class="a" style="left:344px;top:360px;width:1px;height:14px;background:#d4d0c8"></div>
<div class="c" style="left:147px;width:197px;top:361px;color:#000">SUV(Full Size) - Inclusive product - Pl...</div>
<div class="a" style="left:419px;top:360px;width:1px;height:14px;background:#d4d0c8"></div>
<div class="c" style="left:347px;width:72px;top:361px;color:#000">Flexible Car...</div>
<div class="a" style="left:454px;top:360px;width:1px;height:14px;background:#d4d0c8"></div>
<div class="c" style="left:422px;width:32px;top:361px;color:#000">Tue</div>
<div class="a" style="left:524px;top:360px;width:1px;height:14px;background:#d4d0c8"></div>
<div class="c" style="left:457px;width:67px;top:361px;color:#000">28/02/2017</div>
<div class="a" style="left:564px;top:360px;width:1px;height:14px;background:#d4d0c8"></div>
<div class="c" style="left:527px;width:37px;top:361px;color:#000">12:00</div>
<div class="a" style="left:599px;top:360px;width:1px;height:14px;background:#d4d0c8"></div>
<div class="c" style="left:567px;width:32px;top:361px;color:#000">Wed</div>
<div class="a" style="left:669px;top:360px;width:1px;height:14px;background:#d4d0c8"></div>
<div class="c" style="left:602px;width:67px;top:361px;color:#000">08/03/2017</div>
<div class="a" style="left:709px;top:360px;width:1px;height:14px;background:#d4d0c8"></div>
<div class="c" style="left:672px;width:37px;top:361px;color:#000">12:00</div>
<div class="a" style="left:734px;top:360px;width:1px;height:14px;background:#d4d0c8"></div>
<div class="c" style="left:711px;width:21px;text-align:right;top:361px;color:#000">8</div>
<div class="a" style="left:784px;top:360px;width:1px;height:14px;background:#d4d0c8"></div>
<div class="c" style="left:737px;width:47px;top:361px;color:#000">On Air...</div>
<div class="a" style="left:834px;top:360px;width:1px;height:14px;background:#d4d0c8"></div>
<div class="c" style="left:787px;width:47px;top:361px;color:#000">On Air...</div>
<div class="a" style="left:889px;top:360px;width:1px;height:14px;background:#d4d0c8"></div>
<div class="c" style="left:836px;width:51px;text-align:right;top:361px;color:#000">391.40</div>
<div class="a" style="left:954px;top:360px;width:1px;height:14px;background:#d4d0c8"></div>
<div class="c" style="left:891px;width:61px;text-align:right;top:361px;color:#000">391.40</div>
<div class="a" style="left:1029px;top:360px;width:1px;height:14px;background:#d4d0c8"></div>
<div class="c" style="left:957px;width:72px;top:361px;color:#000">Alamo</div>
<div class="a" style="left:1054px;top:360px;width:1px;height:14px;background:#d4d0c8"></div>
<div class="c" style="left:1032px;width:22px;top:361px;color:#000">yes</div>
<div class="a" style="left:1084px;top:360px;width:1px;height:14px;background:#d4d0c8"></div>
<div class="c" style="left:1057px;width:27px;top:361px;color:#000">auto</div>
</div>
<div class="a" style="left:1573px;top:372px;width:16px;height:384px;background:repeating-conic-gradient(#fff 0 25%,#d4d0c8 0 50%) 0 0/2px 2px"></div>
<div class="a" style="left:1573px;top:372px;width:16px;height:16px;background:#d4d0c8;border-top:1px solid #d4d0c8;border-left:1px solid #d4d0c8;border-right:1px solid #404040;border-bottom:1px solid #404040;box-shadow:inset 1px 1px 0 #fff,inset -1px -1px 0 #808080"></div>
<div class="a" style="left:1573px;top:388px;width:16px;height:135px;background:#d4d0c8;border-top:1px solid #d4d0c8;border-left:1px solid #d4d0c8;border-right:1px solid #404040;border-bottom:1px solid #404040;box-shadow:inset 1px 1px 0 #fff,inset -1px -1px 0 #808080"></div>
<div class="a" style="left:1573px;top:740px;width:16px;height:16px;background:#d4d0c8;border-top:1px solid #d4d0c8;border-left:1px solid #d4d0c8;border-right:1px solid #404040;border-bottom:1px solid #404040;box-shadow:inset 1px 1px 0 #fff,inset -1px -1px 0 #808080"></div>
<svg class="a" style="left:1573px;top:372px" width="16" height="16" viewBox="0 0 16 16"><path d="M4 9.5 H11 L7.5 6 Z" fill="#000"/></svg>
<svg class="a" style="left:1573px;top:740px" width="16" height="16" viewBox="0 0 16 16"><path d="M4 6 H11 L7.5 9.5 Z" fill="#000"/></svg>
<div class="t" style="left:222px;top:783px;">First portion: 10.0 sec, total search time: 12.4 sec</div>
<div class="a up" style="left:1560px;top:778px;width:23px;height:22px"></div>
<svg class="a" style="left:1568px;top:783px" width="6" height="12" viewBox="0 0 6 12"><rect x="1.3" y="0" width="3" height="2.6" rx="1" fill="#0a4aa8"/><path d="M0.3 3.8 H3.9 V10.4 H5.2 V11.8 H0 V10.4 H1.4 V5.2 H0.3 Z" fill="#0a4aa8"/></svg>
<div class="a" style="left:215px;top:805px;width:1378px;height:1px;background:#808080"></div>
<div class="a" style="left:215px;top:806px;width:53px;height:17px;border-right:1px solid #808080"></div>
<div class="t" style="left:218px;top:808px;color:#000;font-size:10.4px">Summary</div>
<div class="a" style="left:268px;top:806px;width:41px;height:17px;border-right:1px solid #808080"></div>
<div class="t" style="left:271px;top:808px;color:#000;font-size:10.4px">Search</div>
<div class="a" style="left:309px;top:806px;width:67px;height:17px;background:#ccffcc;border-right:1px solid #808080"></div>
<div class="t" style="left:312px;top:808px;color:#000;font-size:10.4px">Acc 1A MCO</div>
<div class="a" style="left:376px;top:806px;width:67px;height:17px;background:#ccffcc;border-right:1px solid #808080"></div>
<div class="t" style="left:379px;top:808px;color:#000;font-size:10.4px">Acc 1A MCO</div>
<div class="a" style="left:443px;top:806px;width:67px;height:17px;background:#ccffcc;border-right:1px solid #808080"></div>
<div class="t" style="left:446px;top:808px;color:#000;font-size:10.4px">Acc 1A MCO</div>
<div class="a" style="left:510px;top:806px;width:67px;height:17px;background:#ccffcc;border-right:1px solid #808080"></div>
<div class="t" style="left:513px;top:808px;color:#000;font-size:10.4px">Acc 3A MCO</div>
<div class="a" style="left:577px;top:806px;width:50px;height:17px;background:#088a08;border-radius:3px;border-right:1px solid #808080"></div>
<div class="t" style="left:580px;top:808px;color:#fff;font-size:10.4px">Car MCO</div>
<div class="a" style="left:627px;top:806px;width:96px;height:17px;border-right:1px solid #808080"></div>
<div class="t" style="left:630px;top:808px;color:#000;font-size:10.4px">Financial Summary</div>
<div class="t" style="left:806px;top:832px;font-size:10.6px">User: 446 - Clark Silk</div>
<div class="t" style="left:917px;top:832px;font-size:10.6px">Retailer: 'Ocean-Florida'</div>
<div class="t" style="left:1043px;top:832px;font-size:10.6px">Client: none</div>
<div class="t" style="left:1541px;top:832px;font-size:10.4px">14:10 GMT</div>
<div class="a" style="left:0;top:857px;width:1600px;height:1px;background:#fff"></div></div></body></html>
